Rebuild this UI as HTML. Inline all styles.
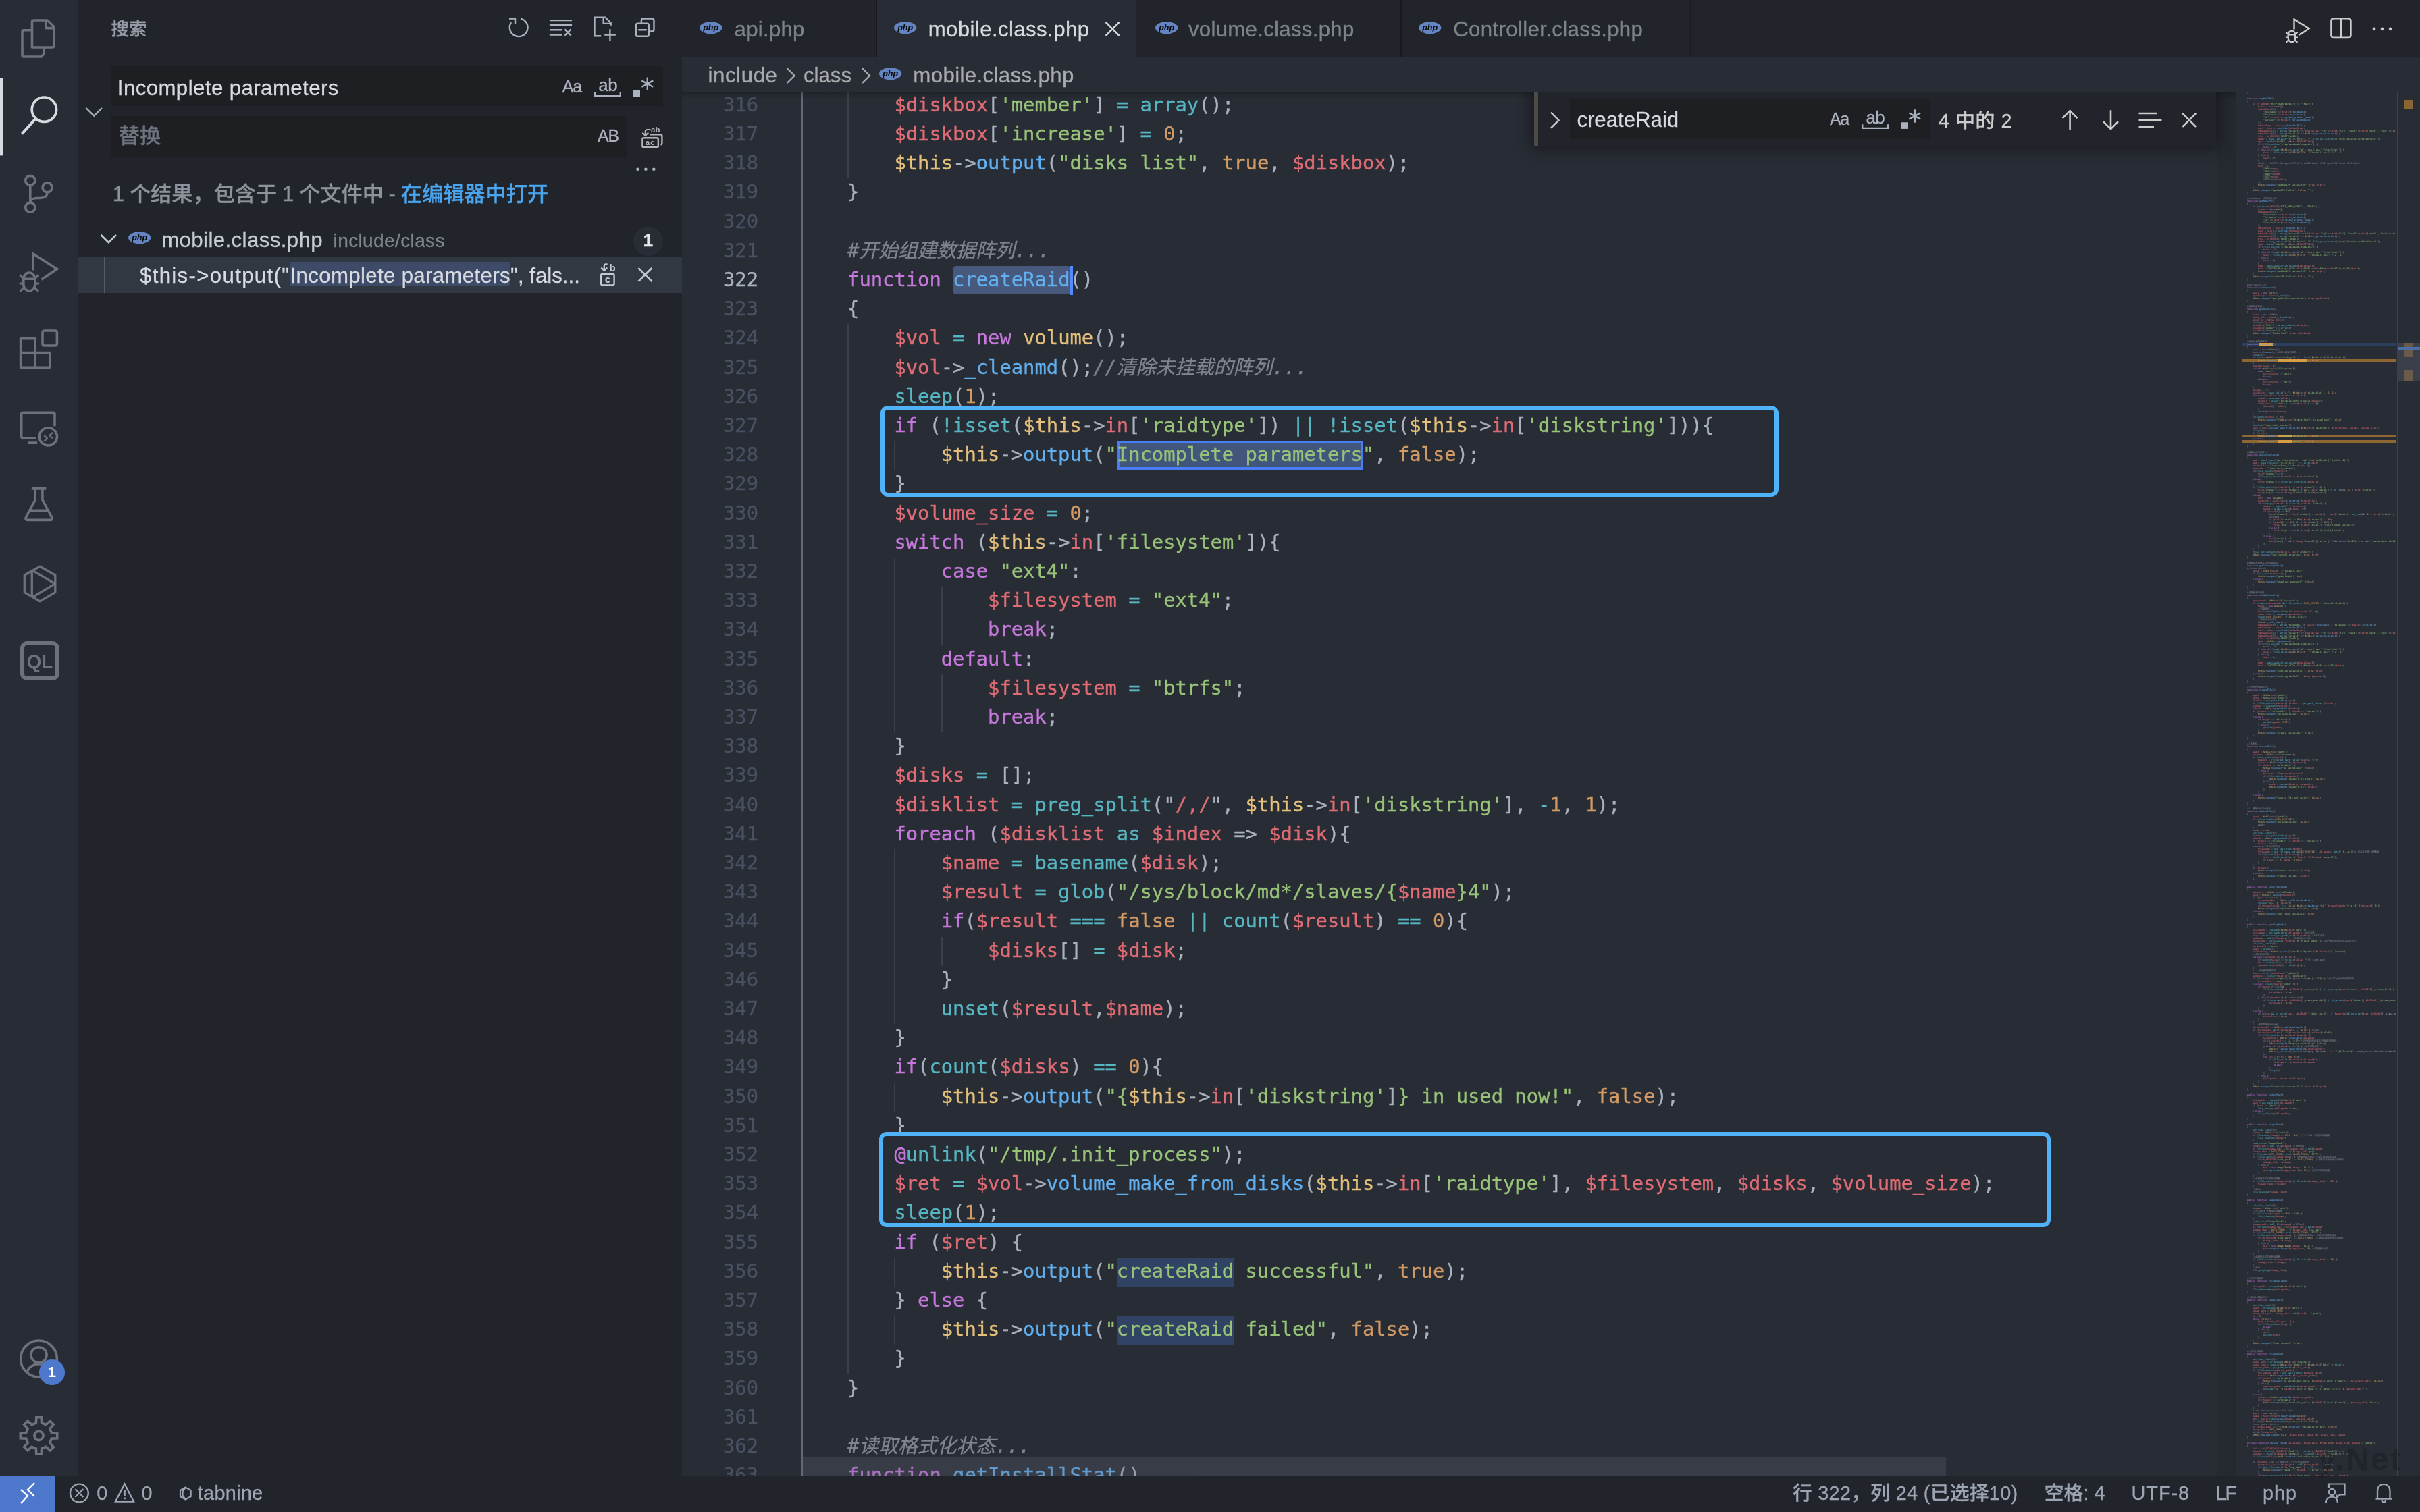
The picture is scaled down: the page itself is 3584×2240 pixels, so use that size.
<!DOCTYPE html><html><head><meta charset="utf-8"><title>mobile.class.php</title><style>
*{box-sizing:border-box}
html,body{margin:0;padding:0;background:#282c34}
body{width:3584px;height:2240px;overflow:hidden;position:relative;font-family:"Liberation Sans","Noto Sans CJK SC",sans-serif;font-size:31.2px;color:#abb2bf;font-weight:500}
div,span,svg{position:absolute}
i{font-style:normal}
.t{white-space:pre;line-height:1;-webkit-text-stroke:.32px}
.mono{font-family:"DejaVu Sans Mono","Noto Sans CJK SC",monospace;font-weight:400}
body>div{will-change:transform}
#act{left:0;top:0;width:116px;height:2186px;background:#282c34}
#side{left:116px;top:0;width:894px;height:2186px;background:#21252b}
#tabs{left:1010px;top:0;width:2574px;height:84px;background:#21252b}
#crumbs{left:1010px;top:84px;width:2574px;height:52.8px;background:#282c34}
#ed{left:1010px;top:136.8px;width:2574px;height:2049.2px;background:#282c34;overflow:hidden}
#status{left:0;top:2186px;width:3584px;height:54px;background:#21252b;font-size:28.8px;color:#9da5b4}
.ln{left:0;width:113px;margin-top:-1.1px;-webkit-text-stroke:.3px;text-align:right;font-size:28.8px;line-height:43.2px;height:43.2px;color:#495162;white-space:pre}
.cl{left:175.7px;margin-top:-1.1px;-webkit-text-stroke:.35px;font-size:28.8px;line-height:43.2px;height:43.2px;white-space:pre;color:#abb2bf}
.p{color:#c678dd}.r{color:#e06c75}.g{color:#98c379}.c{color:#56b6c2}.o{color:#d19a66}.y{color:#e5c07b}.b{color:#61afef}.m{color:#7f848e;font-style:italic}
.ig{width:2.4px;background:#3b4048}
.ig.a{background:#636872}
#mm{left:2310px;top:-0.8px;width:228px;height:2052px;overflow:hidden;font-size:3.322px;line-height:4px;opacity:.74;font-weight:bold}
#mm div{position:static;white-space:pre;height:4px}
</style></head><body><div id="act"><svg style="left:0px;top:0px" width="116" height="2186" viewBox="0 0 116 2186" ><path d="M47.5 70 V32.4 Q47.5 30 50 30 H70.2 L79.8 39.6 V67.6 Q79.8 70 77.4 70 Z M68.2 30.5 V41.6 H79.3" fill="none" stroke="#6c717c" stroke-width="3.6" stroke-linejoin="round" stroke-linecap="butt" /><path d="M47.5 44.8 H35.4 Q33 44.8 33 47.2 V81.6 Q33 84 35.4 84 H61 L65 80 V70" fill="none" stroke="#6c717c" stroke-width="3.6" stroke-linejoin="round" stroke-linecap="butt" /><circle cx="65.4" cy="162.2" r="18.2" fill="none" stroke="#d7dae0" stroke-width="3.7"/><path d="M52.9 175.6 L32.5 198.4" fill="none" stroke="#d7dae0" stroke-width="3.9" stroke-linejoin="round" stroke-linecap="butt" /><rect x="0" y="115.2" width="4.4" height="115.2" fill="#d7dae0"/><circle cx="44.8" cy="267.3" r="7.1" fill="none" stroke="#6c717c" stroke-width="3.6"/><circle cx="70.1" cy="277.7" r="7.1" fill="none" stroke="#6c717c" stroke-width="3.6"/><circle cx="44.8" cy="307.2" r="7.1" fill="none" stroke="#6c717c" stroke-width="3.6"/><path d="M44.8 274.4 V300.1 M70.1 284.8 C70 293.5 62 293.5 55 293.5 C49 293.5 45.5 296 44.8 300.1" fill="none" stroke="#6c717c" stroke-width="3.6" stroke-linejoin="round" stroke-linecap="butt" /><g id="dbg"><path d="M49.1 400.5 V376 L84.6 398.6 L61.4 414.3" fill="none" stroke="#6c717c" stroke-width="3.6" stroke-linejoin="miter" stroke-linecap="butt"/><path d="M34.8 414.5 C34.8 400.5 51.8 400.5 51.8 414.5 V421 C51.8 434 34.8 434 34.8 421 Z M34.8 413.2 H51.8" fill="none" stroke="#6c717c" stroke-width="3.6" stroke-linejoin="miter" stroke-linecap="butt"/><path d="M29.4 407.5 L35.4 413 M57.2 407.5 L51.2 413 M28.6 420 H34.8 M51.8 420 H58 M29.6 431.6 L36 425.8 M57 431.6 L50.6 425.8" fill="none" stroke="#6c717c" stroke-width="3.24" stroke-linejoin="miter" stroke-linecap="butt"/></g><path d="M30.6 500.8 H52.2 V522.6 H73.8 V544.3 H30.6 Z M30.6 522.6 H52.2 V544.3" fill="none" stroke="#6c717c" stroke-width="3.6" stroke-linejoin="round" stroke-linecap="butt" /><rect x="63" y="490" width="21.4" height="22" rx="2.5" fill="none" stroke="#6c717c" stroke-width="3.6"/><path d="M52.9 649 H34.1 Q31.7 649 31.7 646.6 V613.7 Q31.7 611.3 34.1 611.3 H78.6 Q81 611.3 81 613.7 V631.3 M41.1 656.1 H55.2" fill="none" stroke="#6c717c" stroke-width="3.6" stroke-linejoin="round" stroke-linecap="butt" /><circle cx="71.4" cy="646.9" r="13.1" fill="none" stroke="#6c717c" stroke-width="3.6"/><path d="M65.3 645.2 L70 649.4 L65.3 653.6 M78 641 L73.3 645.2 L78 649.4" fill="none" stroke="#6c717c" stroke-width="2.4" stroke-linejoin="round" stroke-linecap="butt" /><path d="M46.8 723.9 H68.3 M52.2 724 V740.5 L38.4 766.5 Q36.8 770.4 40.5 770.4 H74.6 Q78.3 770.4 76.7 766.5 L62.9 740.5 V724 M44.5 756.2 H70.6" fill="none" stroke="#6c717c" stroke-width="3.6" stroke-linejoin="round" stroke-linecap="butt" /><path d="M59.1 839.2 L81.8 852 V877.6 L59.1 890.9 L36.3 877.6 V852 Z M47.3 845.8 V884 M48 845 L81.5 864.8 L48 884.8" fill="none" stroke="#6c717c" stroke-width="3.3" stroke-linejoin="round" stroke-linecap="butt" /><rect x="33" y="953" width="51.9" height="51.9" rx="7" fill="none" stroke="#6c717c" stroke-width="6.1"/><text x="58.9" y="989.8" text-anchor="middle" font-family="Liberation Sans,sans-serif" font-weight="bold" font-size="29" fill="#6c717c" textLength="38.5" lengthAdjust="spacingAndGlyphs">QL</text><circle cx="57.5" cy="2012.9" r="26.9" fill="none" stroke="#6c717c" stroke-width="3.6"/><circle cx="57.5" cy="2007.3" r="11.6" fill="none" stroke="#6c717c" stroke-width="3.6"/><path d="M39.8 2033.5 C42 2025 50 2020.7 57.5 2020.7 C65 2020.7 73 2025 75.2 2033.5" fill="none" stroke="#6c717c" stroke-width="3.6" stroke-linejoin="round" stroke-linecap="butt" /><circle cx="77" cy="2033" r="19.1" fill="#4d78cc"/><text x="77" y="2040.3" text-anchor="middle" font-family="Liberation Sans,sans-serif" font-weight="bold" font-size="21.6" fill="#fff">1</text><path d="M53.4 2108.0 L53.8 2099.8 L61.2 2099.8 L61.6 2108.0 L68.0 2110.7 L74.1 2105.2 L79.3 2110.4 L73.8 2116.5 L76.5 2122.9 L84.7 2123.3 L84.7 2130.7 L76.5 2131.1 L73.8 2137.5 L79.3 2143.6 L74.1 2148.8 L68.0 2143.3 L61.6 2146.0 L61.2 2154.2 L53.8 2154.2 L53.4 2146.0 L47.0 2143.3 L40.9 2148.8 L35.7 2143.6 L41.2 2137.5 L38.5 2131.1 L30.3 2130.7 L30.3 2123.3 L38.5 2122.9 L41.2 2116.5 L35.7 2110.4 L40.9 2105.2 L47.0 2110.7 Z" fill="none" stroke="#6c717c" stroke-width="3.6" stroke-linejoin="miter"/><circle cx="57.5" cy="2127" r="6.6" fill="none" stroke="#6c717c" stroke-width="3.6"/></svg></div><div id="side"><div class="t" style="left:48.5px;top:30.3px;font-size:26.4px;color:#979da8">搜索</div><div style="left:48.5px;top:97.8px;width:817.5px;height:59.6px;background:#1d1f23"></div><div style="left:48.5px;top:172px;width:763.4px;height:59.6px;background:#1d1f23"></div><div class="t" style="left:57.80000000000001px;top:114.6px;font-size:31.2px;color:#d7dae0;letter-spacing:0.43px">Incomplete parameters</div><div class="t" style="left:59.80000000000001px;top:186.4px;font-size:31.2px;color:#6e747f">替换</div><div class="t" style="left:716.8px;top:116.4px;font-size:25px;color:#abb2bf;letter-spacing:-1.3px">Aa</div><div class="t" style="left:770.3px;top:113.2px;font-size:26px;color:#abb2bf;letter-spacing:-0.6px">ab</div><div class="t" style="left:769px;top:188.6px;font-size:25px;color:#abb2bf;letter-spacing:-1.1px">AB</div><div class="t" style="left:50.80000000000001px;top:272px;font-size:31.2px;color:#8d929b;word-spacing:-0.9px">1 个结果，包含于 1 个文件中 - <i style="color:#4aa5f0">在编辑器中打开</i></div><svg style="left:73.2px;top:342.3px" width="35.4" height="20.2"><ellipse cx="17.7" cy="10.1" rx="16.7" ry="9.1" fill="#6585c2"/><text x="17.7" y="13.5" text-anchor="middle" font-family="Liberation Sans,sans-serif" font-style="italic" font-weight="bold" font-size="12.6" fill="#0a0a0a">php</text></svg><div class="t" style="left:123.19999999999999px;top:339.6px;font-size:31.2px;color:#c5cad3;letter-spacing:0.41px">mobile.class.php</div><div class="t" style="left:377.6px;top:343px;font-size:28.08px;color:#7f848e;letter-spacing:0.35px">include/class</div><div style="left:822.4px;top:335.7px;width:43.2px;height:43.2px;border-radius:50%;background:#282c34"></div><div class="t" style="left:836.4px;top:343.2px;font-size:26.4px;color:#e6e8ec;font-weight:bold">1</div><div style="left:0;top:380px;width:894px;height:54px;background:#323842"></div><div style="left:38px;top:380px;width:2.2px;height:54px;background:#565b66"></div><div style="left:313.7px;top:388.2px;width:326.4px;height:35.8px;background:#3d4b69"></div><div class="t" style="left:91px;top:392.6px;font-size:31.2px;color:#d7dae0;letter-spacing:0px"><i style="letter-spacing:1.33px">$this-&gt;output("</i><i style="letter-spacing:.35px">Incomplete parameters</i>", fals...</div><svg style="left:0px;top:0px" width="894" height="500" viewBox="0 0 894 500" ><g transform="translate(-116 0)"><path d="M771.0 27.6 A13.4 13.4 0 1 1 757.1 33.2 M754 27.6 H763 V35.5" fill="none" stroke="#abb2bf" stroke-width="2.4" stroke-linejoin="miter" /><path d="M813.9 30.1 H847.1 M813.9 37 H847.1 M813.9 44.3 H832.7 M813.9 51.5 H832.7 M836.4 43.4 L845.6 52.6 M845.6 43.4 L836.4 52.6" fill="none" stroke="#abb2bf" stroke-width="2.4" stroke-linejoin="miter" /><path d="M890.2 53.2 H880.5 V25.7 H896.4 L904.7 34 V37.8 M893.7 25.7 V34.9 H904.7 M895.2 51.5 H911.9 M903.4 43.3 V59.9" fill="none" stroke="#abb2bf" stroke-width="2.4" stroke-linejoin="miter" /><path d="M944.4 34.8 H958.4 Q960.8 34.8 960.8 37.2 V51.4 Q960.8 53.8 958.4 53.8 H944.4 Q942 53.8 942 51.4 V37.2 Q942 34.8 944.4 34.8 Z M945.2 44.3 H957.7 M949.9 33.6 V30 Q949.9 27.6 952.3 27.6 H966 Q968.5 27.6 968.5 30 V44 Q968.5 46.5 966 46.5 H962" fill="none" stroke="#abb2bf" stroke-width="2.4" stroke-linejoin="miter" /><path d="M127.4 160 L139.2 171.6 L151 160" fill="none" stroke="#abb2bf" stroke-width="2.4" stroke-linejoin="miter" /><circle cx="944.5" cy="250.7" r="2.3" fill="#abb2bf"/><circle cx="956.4" cy="250.7" r="2.3" fill="#abb2bf"/><circle cx="968.3" cy="250.7" r="2.3" fill="#abb2bf"/><path d="M881.2 136.4 V142.1 H918.8 V136.4" fill="none" stroke="#abb2bf" stroke-width="2.4" stroke-linejoin="miter" /><rect x="938" y="133.5" width="10" height="9.6" fill="#abb2bf"/><path d="M958.8 114.4 V134 M950.4 119.4 L967.2 128.8 M967.2 119.4 L950.4 128.8" fill="none" stroke="#abb2bf" stroke-width="2.4" stroke-linejoin="miter" /><path d="M953.4 204.2 H972.8 Q974.8 204.2 974.8 206.2 V216.3 Q974.8 218.3 972.8 218.3 H953.4 Q951.4 218.3 951.4 216.3 V206.2 Q951.4 204.2 953.4 204.2 Z M962 199.2 H978 Q980.4 199.2 980.4 201.6 V212 Q980.4 214 978.4 214.4" fill="none" stroke="#b4b6b8" stroke-width="2.4" stroke-linejoin="miter" /><path d="M963.5 192 H958.5 Q955.8 192 955.8 194.7 V200.5 M951.4 196.4 L955.8 200.9 L960.2 196.4" fill="none" stroke="#b4b6b8" stroke-width="2.2" stroke-linejoin="miter" /><text x="970.8" y="195.6" text-anchor="middle" font-family="Liberation Sans,sans-serif" font-weight="bold" font-size="11.5" fill="#b4b6b8">ab</text><text x="963.2" y="215" text-anchor="middle" font-family="Liberation Sans,sans-serif" font-weight="bold" font-size="11.5" fill="#b4b6b8" letter-spacing="1">ac</text><path d="M149.6 348 L160.8 359.2 L172 348" fill="none" stroke="#c5c9d1" stroke-width="2.6" stroke-linejoin="miter" /><path d="M892.4 405.8 H907.4 Q909.6 405.8 909.6 408 V420.2 Q909.6 422.4 907.4 422.4 H892.4 Q890.2 422.4 890.2 420.2 V408 Q890.2 405.8 892.4 405.8 Z" fill="none" stroke="#c5c9d1" stroke-width="2.4" stroke-linejoin="miter" /><path d="M899.6 391.4 H897.4 Q894.8 391.4 894.8 394 V400.4 M890.4 396.4 L894.8 401 L899.2 396.4" fill="none" stroke="#c5c9d1" stroke-width="2.3" stroke-linejoin="miter" /><text x="907" y="401.6" text-anchor="middle" font-family="Liberation Sans,sans-serif" font-weight="bold" font-size="15" fill="#c5c9d1">b</text><text x="900" y="419.4" text-anchor="middle" font-family="Liberation Sans,sans-serif" font-weight="bold" font-size="15" fill="#c5c9d1">c</text><path d="M945.4 397 L965.4 417 M965.4 397 L945.4 417" fill="none" stroke="#c5c9d1" stroke-width="2.6" stroke-linejoin="miter" /></g></svg></div><div id="tabs"><div style="left:288.20000000000005px;top:0;width:383.79999999999995px;height:84px;background:#282c34"></div><div style="left:287.20000000000005px;top:0;width:1.4px;height:84px;background:#181a1f"></div><div style="left:672px;top:0;width:1.4px;height:84px;background:#181a1f"></div><div style="left:1064.4px;top:0;width:1.4px;height:84px;background:#181a1f"></div><div style="left:1492.5px;top:0;width:1.4px;height:84px;background:#181a1f"></div><svg style="left:25.2px;top:30.9px" width="35.4" height="20.2"><ellipse cx="17.7" cy="10.1" rx="16.7" ry="9.1" fill="#6585c2"/><text x="17.7" y="13.5" text-anchor="middle" font-family="Liberation Sans,sans-serif" font-style="italic" font-weight="bold" font-size="12.6" fill="#0a0a0a">php</text></svg><div class="t" style="left:77.59999999999991px;top:27.6px;font-size:31.2px;color:#7e828a;letter-spacing:0.25px">api.php</div><svg style="left:313.1px;top:30.9px" width="35.4" height="20.2"><ellipse cx="17.7" cy="10.1" rx="16.7" ry="9.1" fill="#6585c2"/><text x="17.7" y="13.5" text-anchor="middle" font-family="Liberation Sans,sans-serif" font-style="italic" font-weight="bold" font-size="12.6" fill="#0a0a0a">php</text></svg><div class="t" style="left:364.70000000000005px;top:27.6px;font-size:31.2px;color:#d7dae0;letter-spacing:0.4px">mobile.class.php</div><svg style="left:699.8px;top:30.9px" width="35.4" height="20.2"><ellipse cx="17.7" cy="10.1" rx="16.7" ry="9.1" fill="#6585c2"/><text x="17.7" y="13.5" text-anchor="middle" font-family="Liberation Sans,sans-serif" font-style="italic" font-weight="bold" font-size="12.6" fill="#0a0a0a">php</text></svg><div class="t" style="left:749.9000000000001px;top:27.6px;font-size:31.2px;color:#7e828a;letter-spacing:0.3px">volume.class.php</div><svg style="left:1090.3px;top:30.9px" width="35.4" height="20.2"><ellipse cx="17.7" cy="10.1" rx="16.7" ry="9.1" fill="#6585c2"/><text x="17.7" y="13.5" text-anchor="middle" font-family="Liberation Sans,sans-serif" font-style="italic" font-weight="bold" font-size="12.6" fill="#0a0a0a">php</text></svg><div class="t" style="left:1142.1999999999998px;top:27.6px;font-size:31.2px;color:#7e828a;letter-spacing:0.36px">Controller.class.php</div><svg style="left:0px;top:0px" width="2574" height="84" viewBox="0 0 2574 84" ><g transform="translate(-1010 0)"><path d="M1637.6 32.8 L1657.6 52.8 M1657.6 32.8 L1637.6 52.8" fill="none" stroke="#d7dae0" stroke-width="2.6"/><g transform="translate(3385 27.4) scale(0.617) translate(-28.8 -374.4)"><path d="M49.1 400.5 V376 L84.6 398.6 L61.4 414.3" fill="none" stroke="#cccccc" stroke-width="3.9" stroke-linejoin="miter" stroke-linecap="butt"/><path d="M34.8 414.5 C34.8 400.5 51.8 400.5 51.8 414.5 V421 C51.8 434 34.8 434 34.8 421 Z M34.8 413.2 H51.8" fill="none" stroke="#cccccc" stroke-width="3.9" stroke-linejoin="miter" stroke-linecap="butt"/><path d="M29.4 407.5 L35.4 413 M57.2 407.5 L51.2 413 M28.6 420 H34.8 M51.8 420 H58 M29.6 431.6 L36 425.8 M57 431.6 L50.6 425.8" fill="none" stroke="#cccccc" stroke-width="3.51" stroke-linejoin="miter" stroke-linecap="butt"/></g><rect x="3452.5" y="27.2" width="28.9" height="28.7" rx="3.5" fill="none" stroke="#cccccc" stroke-width="2.6"/><path d="M3466.9 27.2 V55.9" fill="none" stroke="#cccccc" stroke-width="2.6"/><circle cx="3516" cy="42.9" r="2.35" fill="#cccccc"/><circle cx="3528" cy="42.9" r="2.35" fill="#cccccc"/><circle cx="3540.1" cy="42.9" r="2.35" fill="#cccccc"/></g></svg></div><div id="crumbs"><div class="t" style="left:38.40000000000009px;top:12px;font-size:31.2px;color:#a9aaad;letter-spacing:0.62px">include</div><div class="t" style="left:180px;top:12px;font-size:31.2px;color:#a9aaad;letter-spacing:0px">class</div><svg style="left:291.0px;top:15.4px" width="35.4" height="20.2"><ellipse cx="17.7" cy="10.1" rx="16.7" ry="9.1" fill="#6585c2"/><text x="17.7" y="13.5" text-anchor="middle" font-family="Liberation Sans,sans-serif" font-style="italic" font-weight="bold" font-size="12.6" fill="#0a0a0a">php</text></svg><div class="t" style="left:342.29999999999995px;top:12px;font-size:31.2px;color:#a9aaad;letter-spacing:0.39px">mobile.class.php</div><svg style="left:0px;top:0px" width="700" height="52.8" viewBox="0 0 700 52.8" ><g transform="translate(-1010 -84)"><path d="M1165.6 101 L1176.6 112 L1165.6 123 M1277 101 L1288 112 L1277 123" fill="none" stroke="#a9aaad" stroke-width="2.4"/></g></svg></div><div id="ed"><div style="left:401.6px;top:257.0px;width:173.4px;height:42.0px;background:#47597c;border-radius:4px"></div><div style="left:644.1px;top:515.6px;width:364.7px;height:43.800000000000004px;background:#42557b;border:4.4px solid #4a7cf6"></div><div style="left:644.4px;top:1725.8px;width:173.4px;height:43.2px;background:#314365"></div><div style="left:644.4px;top:1812.2px;width:173.4px;height:43.2px;background:#314365"></div><div class="ig a" style="left:176.2px;top:-2.2px;height:43.2px"></div><div class="ig" style="left:244.7px;top:-2.2px;height:43.2px"></div><div class="ig a" style="left:176.2px;top:41.0px;height:43.2px"></div><div class="ig" style="left:244.7px;top:41.0px;height:43.2px"></div><div class="ig a" style="left:176.2px;top:84.2px;height:43.2px"></div><div class="ig" style="left:244.7px;top:84.2px;height:43.2px"></div><div class="ig a" style="left:176.2px;top:127.4px;height:43.2px"></div><div class="ig a" style="left:176.2px;top:170.6px;height:43.2px"></div><div class="ig a" style="left:176.2px;top:213.8px;height:43.2px"></div><div class="ig a" style="left:176.2px;top:257.0px;height:43.2px"></div><div class="ig a" style="left:176.2px;top:300.2px;height:43.2px"></div><div class="ig a" style="left:176.2px;top:343.4px;height:43.2px"></div><div class="ig" style="left:244.7px;top:343.4px;height:43.2px"></div><div class="ig a" style="left:176.2px;top:386.6px;height:43.2px"></div><div class="ig" style="left:244.7px;top:386.6px;height:43.2px"></div><div class="ig a" style="left:176.2px;top:429.8px;height:43.2px"></div><div class="ig" style="left:244.7px;top:429.8px;height:43.2px"></div><div class="ig a" style="left:176.2px;top:473.0px;height:43.2px"></div><div class="ig" style="left:244.7px;top:473.0px;height:43.2px"></div><div class="ig a" style="left:176.2px;top:516.2px;height:43.2px"></div><div class="ig" style="left:244.7px;top:516.2px;height:43.2px"></div><div class="ig" style="left:314.0px;top:516.2px;height:43.2px"></div><div class="ig a" style="left:176.2px;top:559.4px;height:43.2px"></div><div class="ig" style="left:244.7px;top:559.4px;height:43.2px"></div><div class="ig a" style="left:176.2px;top:602.6px;height:43.2px"></div><div class="ig" style="left:244.7px;top:602.6px;height:43.2px"></div><div class="ig a" style="left:176.2px;top:645.8px;height:43.2px"></div><div class="ig" style="left:244.7px;top:645.8px;height:43.2px"></div><div class="ig a" style="left:176.2px;top:689.0px;height:43.2px"></div><div class="ig" style="left:244.7px;top:689.0px;height:43.2px"></div><div class="ig" style="left:314.0px;top:689.0px;height:43.2px"></div><div class="ig a" style="left:176.2px;top:732.2px;height:43.2px"></div><div class="ig" style="left:244.7px;top:732.2px;height:43.2px"></div><div class="ig" style="left:314.0px;top:732.2px;height:43.2px"></div><div class="ig" style="left:383.4px;top:732.2px;height:43.2px"></div><div class="ig a" style="left:176.2px;top:775.4px;height:43.2px"></div><div class="ig" style="left:244.7px;top:775.4px;height:43.2px"></div><div class="ig" style="left:314.0px;top:775.4px;height:43.2px"></div><div class="ig" style="left:383.4px;top:775.4px;height:43.2px"></div><div class="ig a" style="left:176.2px;top:818.6px;height:43.2px"></div><div class="ig" style="left:244.7px;top:818.6px;height:43.2px"></div><div class="ig" style="left:314.0px;top:818.6px;height:43.2px"></div><div class="ig a" style="left:176.2px;top:861.8px;height:43.2px"></div><div class="ig" style="left:244.7px;top:861.8px;height:43.2px"></div><div class="ig" style="left:314.0px;top:861.8px;height:43.2px"></div><div class="ig" style="left:383.4px;top:861.8px;height:43.2px"></div><div class="ig a" style="left:176.2px;top:905.0px;height:43.2px"></div><div class="ig" style="left:244.7px;top:905.0px;height:43.2px"></div><div class="ig" style="left:314.0px;top:905.0px;height:43.2px"></div><div class="ig" style="left:383.4px;top:905.0px;height:43.2px"></div><div class="ig a" style="left:176.2px;top:948.2px;height:43.2px"></div><div class="ig" style="left:244.7px;top:948.2px;height:43.2px"></div><div class="ig a" style="left:176.2px;top:991.4px;height:43.2px"></div><div class="ig" style="left:244.7px;top:991.4px;height:43.2px"></div><div class="ig a" style="left:176.2px;top:1034.6px;height:43.2px"></div><div class="ig" style="left:244.7px;top:1034.6px;height:43.2px"></div><div class="ig a" style="left:176.2px;top:1077.8px;height:43.2px"></div><div class="ig" style="left:244.7px;top:1077.8px;height:43.2px"></div><div class="ig a" style="left:176.2px;top:1121.0px;height:43.2px"></div><div class="ig" style="left:244.7px;top:1121.0px;height:43.2px"></div><div class="ig" style="left:314.0px;top:1121.0px;height:43.2px"></div><div class="ig a" style="left:176.2px;top:1164.2px;height:43.2px"></div><div class="ig" style="left:244.7px;top:1164.2px;height:43.2px"></div><div class="ig" style="left:314.0px;top:1164.2px;height:43.2px"></div><div class="ig a" style="left:176.2px;top:1207.4px;height:43.2px"></div><div class="ig" style="left:244.7px;top:1207.4px;height:43.2px"></div><div class="ig" style="left:314.0px;top:1207.4px;height:43.2px"></div><div class="ig a" style="left:176.2px;top:1250.6px;height:43.2px"></div><div class="ig" style="left:244.7px;top:1250.6px;height:43.2px"></div><div class="ig" style="left:314.0px;top:1250.6px;height:43.2px"></div><div class="ig" style="left:383.4px;top:1250.6px;height:43.2px"></div><div class="ig a" style="left:176.2px;top:1293.8px;height:43.2px"></div><div class="ig" style="left:244.7px;top:1293.8px;height:43.2px"></div><div class="ig" style="left:314.0px;top:1293.8px;height:43.2px"></div><div class="ig a" style="left:176.2px;top:1337.0px;height:43.2px"></div><div class="ig" style="left:244.7px;top:1337.0px;height:43.2px"></div><div class="ig" style="left:314.0px;top:1337.0px;height:43.2px"></div><div class="ig a" style="left:176.2px;top:1380.2px;height:43.2px"></div><div class="ig" style="left:244.7px;top:1380.2px;height:43.2px"></div><div class="ig a" style="left:176.2px;top:1423.4px;height:43.2px"></div><div class="ig" style="left:244.7px;top:1423.4px;height:43.2px"></div><div class="ig a" style="left:176.2px;top:1466.6px;height:43.2px"></div><div class="ig" style="left:244.7px;top:1466.6px;height:43.2px"></div><div class="ig" style="left:314.0px;top:1466.6px;height:43.2px"></div><div class="ig a" style="left:176.2px;top:1509.8px;height:43.2px"></div><div class="ig" style="left:244.7px;top:1509.8px;height:43.2px"></div><div class="ig a" style="left:176.2px;top:1553.0px;height:43.2px"></div><div class="ig" style="left:244.7px;top:1553.0px;height:43.2px"></div><div class="ig a" style="left:176.2px;top:1596.2px;height:43.2px"></div><div class="ig" style="left:244.7px;top:1596.2px;height:43.2px"></div><div class="ig a" style="left:176.2px;top:1639.4px;height:43.2px"></div><div class="ig" style="left:244.7px;top:1639.4px;height:43.2px"></div><div class="ig a" style="left:176.2px;top:1682.6px;height:43.2px"></div><div class="ig" style="left:244.7px;top:1682.6px;height:43.2px"></div><div class="ig a" style="left:176.2px;top:1725.8px;height:43.2px"></div><div class="ig" style="left:244.7px;top:1725.8px;height:43.2px"></div><div class="ig" style="left:314.0px;top:1725.8px;height:43.2px"></div><div class="ig a" style="left:176.2px;top:1769.0px;height:43.2px"></div><div class="ig" style="left:244.7px;top:1769.0px;height:43.2px"></div><div class="ig a" style="left:176.2px;top:1812.2px;height:43.2px"></div><div class="ig" style="left:244.7px;top:1812.2px;height:43.2px"></div><div class="ig" style="left:314.0px;top:1812.2px;height:43.2px"></div><div class="ig a" style="left:176.2px;top:1855.4px;height:43.2px"></div><div class="ig" style="left:244.7px;top:1855.4px;height:43.2px"></div><div class="ig a" style="left:176.2px;top:1898.6px;height:43.2px"></div><div class="ig a" style="left:176.2px;top:1941.8px;height:43.2px"></div><div class="ig a" style="left:176.2px;top:1985.0px;height:43.2px"></div><div class="ig a" style="left:176.2px;top:2028.2px;height:43.2px"></div><div class="ln mono" style="top:-2.2px">316</div><div class="cl mono" style="top:-2.2px">        <i class=r>$diskbox</i>[<i class=g>'member'</i>] <i class=c>= array</i>();</div><div class="ln mono" style="top:41.0px">317</div><div class="cl mono" style="top:41.0px">        <i class=r>$diskbox</i>[<i class=g>'increase'</i>] <i class=c>= </i><i class=o>0</i>;</div><div class="ln mono" style="top:84.2px">318</div><div class="cl mono" style="top:84.2px">        <i class=y>$this</i>-&gt;<i class=b>output</i>(<i class=g>"disks list"</i>, <i class=o>true</i>, <i class=r>$diskbox</i>);</div><div class="ln mono" style="top:127.4px">319</div><div class="cl mono" style="top:127.4px">    }</div><div class="ln mono" style="top:170.6px">320</div><div class="ln mono" style="top:213.8px">321</div><div class="cl mono" style="top:213.8px">    <i class=m>#开始组建数据阵列...</i></div><div class="ln mono" style="top:257.0px;color:#abb2bf">322</div><div class="cl mono" style="top:257.0px">    <i class=p>function </i><i class=b>createRaid</i>()</div><div class="ln mono" style="top:300.2px">323</div><div class="cl mono" style="top:300.2px">    {</div><div class="ln mono" style="top:343.4px">324</div><div class="cl mono" style="top:343.4px">        <i class=r>$vol </i><i class=c>= </i><i class=p>new </i><i class=y>volume</i>();</div><div class="ln mono" style="top:386.6px">325</div><div class="cl mono" style="top:386.6px">        <i class=r>$vol</i>-&gt;<i class=b>_cleanmd</i>();<i class=m>//清除未挂载的阵列...</i></div><div class="ln mono" style="top:429.8px">326</div><div class="cl mono" style="top:429.8px">        <i class=c>sleep</i>(<i class=o>1</i>);</div><div class="ln mono" style="top:473.0px">327</div><div class="cl mono" style="top:473.0px">        <i class=p>if </i>(<i class=c>!isset</i>(<i class=y>$this</i>-&gt;<i class=r>in</i>[<i class=g>'raidtype'</i>]) <i class=c>|| !isset</i>(<i class=y>$this</i>-&gt;<i class=r>in</i>[<i class=g>'diskstring'</i>])){</div><div class="ln mono" style="top:516.2px">328</div><div class="cl mono" style="top:516.2px">            <i class=y>$this</i>-&gt;<i class=b>output</i>(<i class=g>"Incomplete parameters"</i>, <i class=o>false</i>);</div><div class="ln mono" style="top:559.4px">329</div><div class="cl mono" style="top:559.4px">        }</div><div class="ln mono" style="top:602.6px">330</div><div class="cl mono" style="top:602.6px">        <i class=r>$volume_size </i><i class=c>= </i><i class=o>0</i>;</div><div class="ln mono" style="top:645.8px">331</div><div class="cl mono" style="top:645.8px">        <i class=p>switch </i>(<i class=y>$this</i>-&gt;<i class=r>in</i>[<i class=g>'filesystem'</i>]){</div><div class="ln mono" style="top:689.0px">332</div><div class="cl mono" style="top:689.0px">            <i class=p>case </i><i class=g>"ext4"</i>:</div><div class="ln mono" style="top:732.2px">333</div><div class="cl mono" style="top:732.2px">                <i class=r>$filesystem </i><i class=c>= </i><i class=g>"ext4"</i>;</div><div class="ln mono" style="top:775.4px">334</div><div class="cl mono" style="top:775.4px">                <i class=p>break</i>;</div><div class="ln mono" style="top:818.6px">335</div><div class="cl mono" style="top:818.6px">            <i class=p>default</i>:</div><div class="ln mono" style="top:861.8px">336</div><div class="cl mono" style="top:861.8px">                <i class=r>$filesystem </i><i class=c>= </i><i class=g>"btrfs"</i>;</div><div class="ln mono" style="top:905.0px">337</div><div class="cl mono" style="top:905.0px">                <i class=p>break</i>;</div><div class="ln mono" style="top:948.2px">338</div><div class="cl mono" style="top:948.2px">        }</div><div class="ln mono" style="top:991.4px">339</div><div class="cl mono" style="top:991.4px">        <i class=r>$disks </i><i class=c>= </i>[];</div><div class="ln mono" style="top:1034.6px">340</div><div class="cl mono" style="top:1034.6px">        <i class=r>$disklist </i><i class=c>= preg_split</i>("<i class=r>/,/</i>", <i class=y>$this</i>-&gt;<i class=r>in</i>[<i class=g>'diskstring'</i>], <i class=c>-</i><i class=o>1</i>, <i class=o>1</i>);</div><div class="ln mono" style="top:1077.8px">341</div><div class="cl mono" style="top:1077.8px">        <i class=p>foreach </i>(<i class=r>$disklist </i><i class=c>as </i><i class=r>$index </i>=&gt; <i class=r>$disk</i>){</div><div class="ln mono" style="top:1121.0px">342</div><div class="cl mono" style="top:1121.0px">            <i class=r>$name </i><i class=c>= basename</i>(<i class=r>$disk</i>);</div><div class="ln mono" style="top:1164.2px">343</div><div class="cl mono" style="top:1164.2px">            <i class=r>$result </i><i class=c>= glob</i>(<i class=g>"/sys/block/md*/slaves/{</i><i class=r>$name</i><i class=g>}4"</i>);</div><div class="ln mono" style="top:1207.4px">344</div><div class="cl mono" style="top:1207.4px">            <i class=p>if</i>(<i class=r>$result </i><i class=c>=== </i><i class=o>false </i><i class=c>|| count</i>(<i class=r>$result</i>) <i class=c>== </i><i class=o>0</i>){</div><div class="ln mono" style="top:1250.6px">345</div><div class="cl mono" style="top:1250.6px">                <i class=r>$disks</i>[] <i class=c>= </i><i class=r>$disk</i>;</div><div class="ln mono" style="top:1293.8px">346</div><div class="cl mono" style="top:1293.8px">            }</div><div class="ln mono" style="top:1337.0px">347</div><div class="cl mono" style="top:1337.0px">            <i class=c>unset</i>(<i class=r>$result</i>,<i class=r>$name</i>);</div><div class="ln mono" style="top:1380.2px">348</div><div class="cl mono" style="top:1380.2px">        }</div><div class="ln mono" style="top:1423.4px">349</div><div class="cl mono" style="top:1423.4px">        <i class=p>if</i>(<i class=c>count</i>(<i class=r>$disks</i>) <i class=c>== </i><i class=o>0</i>){</div><div class="ln mono" style="top:1466.6px">350</div><div class="cl mono" style="top:1466.6px">            <i class=y>$this</i>-&gt;<i class=b>output</i>(<i class=g>"{</i><i class=y>$this</i>-&gt;<i class=r>in</i>[<i class=g>'diskstring'</i>]<i class=g>} in used now!"</i>, <i class=o>false</i>);</div><div class="ln mono" style="top:1509.8px">351</div><div class="cl mono" style="top:1509.8px">        }</div><div class="ln mono" style="top:1553.0px">352</div><div class="cl mono" style="top:1553.0px">        <i class=p>@</i><i class=c>unlink</i>(<i class=g>"/tmp/.init_process"</i>);</div><div class="ln mono" style="top:1596.2px">353</div><div class="cl mono" style="top:1596.2px">        <i class=r>$ret </i><i class=c>= </i><i class=r>$vol</i>-&gt;<i class=b>volume_make_from_disks</i>(<i class=y>$this</i>-&gt;<i class=r>in</i>[<i class=g>'raidtype'</i>], <i class=r>$filesystem</i>, <i class=r>$disks</i>, <i class=r>$volume_size</i>);</div><div class="ln mono" style="top:1639.4px">354</div><div class="cl mono" style="top:1639.4px">        <i class=c>sleep</i>(<i class=o>1</i>);</div><div class="ln mono" style="top:1682.6px">355</div><div class="cl mono" style="top:1682.6px">        <i class=p>if </i>(<i class=r>$ret</i>) {</div><div class="ln mono" style="top:1725.8px">356</div><div class="cl mono" style="top:1725.8px">            <i class=y>$this</i>-&gt;<i class=b>output</i>(<i class=g>"createRaid successful"</i>, <i class=o>true</i>);</div><div class="ln mono" style="top:1769.0px">357</div><div class="cl mono" style="top:1769.0px">        } <i class=p>else </i>{</div><div class="ln mono" style="top:1812.2px">358</div><div class="cl mono" style="top:1812.2px">            <i class=y>$this</i>-&gt;<i class=b>output</i>(<i class=g>"createRaid failed"</i>, <i class=o>false</i>);</div><div class="ln mono" style="top:1855.4px">359</div><div class="cl mono" style="top:1855.4px">        }</div><div class="ln mono" style="top:1898.6px">360</div><div class="cl mono" style="top:1898.6px">    }</div><div class="ln mono" style="top:1941.8px">361</div><div class="ln mono" style="top:1985.0px">362</div><div class="cl mono" style="top:1985.0px">    <i class=m>#读取格式化状态...</i></div><div class="ln mono" style="top:2028.2px">363</div><div class="cl mono" style="top:2028.2px">    <i class=p>function </i><i class=b>getInstallStat</i>()</div><div style="left:574.4px;top:257.0px;width:4.8px;height:43.2px;background:#528bff"></div><div style="left:293.5px;top:464.0px;width:1330.8px;height:135.2px;border:6.3px solid #50b2f8;border-radius:11px"></div><div style="left:291.8px;top:1540.3px;width:1735.0px;height:141.1px;border:6.3px solid #50b2f8;border-radius:11px"></div><div style="left:0;top:0;width:2302px;height:10px;background:linear-gradient(rgba(0,0,0,.2),rgba(0,0,0,0))"></div><div id="mmd" style="left:2310px;top:-0.8px;width:228px;height:2052px;overflow:hidden"><span style="left:0;top:372px;width:228px;height:4px;background:#2b405e"></span><span style="left:26px;top:372px;width:20px;height:4px;background:#e0963a"></span><span style="left:0;top:396px;width:228px;height:4px;background:#8e6632"></span><span style="left:54px;top:396px;width:42px;height:4px;background:#e0963a"></span><span style="left:0;top:508px;width:228px;height:4px;background:#8e6632"></span><span style="left:54px;top:508px;width:20px;height:4px;background:#e0963a"></span><span style="left:0;top:516px;width:228px;height:4px;background:#8e6632"></span><span style="left:54px;top:516px;width:20px;height:4px;background:#e0963a"></span></div><div id="mm" class="mono"><div>    }</div><div></div><div>    <i class=p>function </i><i class=b>appNasIPS</i>()</div><div>    {</div><div>        <i class=p>if </i>(<i class=r>$_SERVER</i>[<i class=g>'HTTP_USER_DEVICE'</i>] <i class=c>== </i><i class=g>"TNAS"</i>) {</div><div>            <i class=r>$core </i><i class=c>= </i><i class=p>new </i><i class=y>core</i>();</div><div>            <i class=r>$dataSheet</i>[<i class=o>0</i>] <i class=c>= </i>[</div><div>                <i class=g>"hostname" </i>=&gt; <i class=r>$core</i>-&gt;<i class=b>_hostname</i>(),</div><div>                <i class=g>"firmware" </i>=&gt; <i class=r>$core</i>-&gt;<i class=b>_version</i>(),</div><div>                <i class=g>"sn" </i>=&gt; <i class=r>$core</i>-&gt;<i class=b>_system_product_name</i>(),</div><div>                <i class=g>"version" </i>=&gt; <i class=r>$core</i>-&gt;<i class=b>_VersionNumber</i>()</div><div>            ];</div><div>            <i class=r>$defaultgw </i><i class=c>= </i><i class=r>$core</i>-&gt;<i class=b>_default_NIC</i>();</div><div>            <i class=r>$eth </i><i class=c>= </i><i class=r>$core</i>-&gt;<i class=b>_netlink</i>(<i class=r>$defaultgw</i>);</div><div>            <i class=r>$dataSheet</i>[<i class=o>1</i>] <i class=c>= array</i>(<i class=g>"network" </i>=&gt; <i class=r>$defaultgw</i>, <i class=g>"ip" </i>=&gt; <i class=r>$eth</i>[<i class=g>'ip'</i>], <i class=g>"mask" </i>=&gt; <i class=r>$eth</i>[<i class=g>'mask'</i>], <i class=g>"mac" </i>=&gt; <i class=r>$eth</i>['</div><div>            <i class=r>$dataSheet</i>[<i class=o>2</i>] <i class=c>= array</i>(<i class=g>"service" </i>=&gt; <i class=y>$this</i>-&gt;<i class=b>_getservicelist</i>());</div><div>            <i class=r>$ifc </i><i class=c>= </i><i class=r>$_SERVER</i>[<i class=g>'REMOTE_ADDR'</i>];</div><div>            <i class=r>$addr </i><i class=c>= preg_replace</i>(<i class=g>"/[:\s\r\n]+/"</i>, <i class=g>""</i>, <i class=c>file_get_contents</i>(<i class=g>"/sys/class/net/eth0/address"</i>));</div><div>            <i class=r>$pwd </i><i class=c>= hash</i>(<i class=g>"sha256"</i>, <i class=y>$this</i>-&gt;<i class=r>REQUESTCODE</i>);</div><div>            <i class=p>if </i>(<i class=c>!file_exists</i>(<i class=g>"/tmp/databack/complete"</i>)) {</div><div>                <i class=r>$sat </i><i class=c>= -</i><i class=o>1</i>;</div><div>            } <i class=p>else if </i>(<i class=c>!empty</i>(<i class=y>$this</i>-&gt;<i class=b>_exec</i>(<i class=g>"df -json | awk '/\/mnt\/md/'"</i>))) {</div><div>                <i class=r>$sat </i><i class=c>= !file_exists</i>(<i class=o>USER_SYSTEM </i><i class=c>. </i><i class=g>"/install.lock"</i>) <i class=c>? </i><i class=o>2 </i>: <i class=o>1</i>;</div><div>            } <i class=p>else </i>{</div><div>                <i class=r>$sat </i><i class=c>= </i><i class=o>0</i>;</div><div>            }</div><div>            <i class=m>#$tpl = "NOTIFY Message\nIFC:$ifc\nADDR:$addr\nPWD:$pwd\nSAT:$sat\nDAT:$dat";</i></div><div>            <i class=r>$tpl </i><i class=c>= </i>[</div><div>                <i class=g>"PWD"</i>=&gt;<i class=r>$pwd</i>,</div><div>                <i class=g>"IFC"</i>=&gt;<i class=r>$ifc</i>,</div><div>                <i class=g>"ADDR"</i>=&gt;<i class=r>$addr</i>,</div><div>                <i class=g>"SAT"</i>=&gt;<i class=r>$sat</i>,</div><div>                <i class=g>"DAT"</i>=&gt;<i class=r>$dataSheet</i>,</div><div>            ];</div><div>            <i class=y>$this</i>-&gt;<i class=b>output</i>(<i class=g>"appNasIPS successful"</i>, <i class=o>true</i>, <i class=r>$tpl</i>);</div><div>        }</div><div>        <i class=y>$this</i>-&gt;<i class=b>output</i>(<i class=g>"appNasIPS failed"</i>, <i class=o>false</i>, <i class=g>""</i>);</div><div>    }</div><div></div><div>    <i class=m>//webNas()  获取设备信息</i></div><div>    <i class=p>function </i><i class=b>webNasIPS</i>()</div><div>    {</div><div>        <i class=p>if </i>(<i class=c>strstr</i>(<i class=r>$_SERVER</i>[<i class=g>'HTTP_USER_AGENT'</i>], <i class=g>"TNAS"</i>)) {</div><div>            <i class=r>$core </i><i class=c>= </i><i class=p>new </i><i class=y>core</i>();</div><div>            <i class=r>$dataSheet</i>[<i class=o>0</i>] <i class=c>= </i>[</div><div>                <i class=g>"hostname" </i>=&gt; <i class=r>$core</i>-&gt;<i class=b>_hostname</i>(),</div><div>                <i class=g>"firmware" </i>=&gt; <i class=r>$core</i>-&gt;<i class=b>_version</i>(),</div><div>                <i class=g>"sn" </i>=&gt; <i class=r>$core</i>-&gt;<i class=b>_system_product_name</i>(),</div><div>                <i class=g>"version" </i>=&gt; <i class=r>$core</i>-&gt;<i class=b>_VersionNumber</i>()</div><div>            ];</div><div>            <i class=r>$defaultgw </i><i class=c>= </i><i class=r>$core</i>-&gt;<i class=b>_default_NIC</i>();</div><div>            <i class=r>$eth </i><i class=c>= </i><i class=r>$core</i>-&gt;<i class=b>_netlink</i>(<i class=r>$defaultgw</i>);</div><div>            <i class=r>$dataSheet</i>[<i class=o>1</i>] <i class=c>= array</i>(<i class=g>"network" </i>=&gt; <i class=r>$defaultgw</i>, <i class=g>"ip" </i>=&gt; <i class=r>$eth</i>[<i class=g>'ip'</i>], <i class=g>"mask" </i>=&gt; <i class=r>$eth</i>[<i class=g>'mask'</i>], <i class=g>"mac" </i>=&gt; <i class=r>$eth</i>['</div><div>            <i class=r>$dataSheet</i>[<i class=o>2</i>] <i class=c>= array</i>(<i class=g>"service" </i>=&gt; <i class=y>$this</i>-&gt;<i class=b>_getservicelist</i>());</div><div>            <i class=r>$ifc </i><i class=c>= </i><i class=r>$_SERVER</i>[<i class=g>'REMOTE_ADDR'</i>];</div><div>            <i class=r>$addr </i><i class=c>= preg_replace</i>(<i class=g>"/[:\s\r\n]+/"</i>, <i class=g>""</i>, <i class=c>file_get_contents</i>(<i class=g>"/sys/class/net/eth0/address"</i>));</div><div>            <i class=r>$pwd </i><i class=c>= hash</i>(<i class=g>"sha256"</i>, <i class=y>$this</i>-&gt;<i class=r>REQUESTCODE</i>);</div><div>            <i class=p>if </i>(<i class=c>!file_exists</i>(<i class=g>"/tmp/databack/complete"</i>)) {</div><div>                <i class=r>$sat </i><i class=c>= -</i><i class=o>1</i>;</div><div>            } <i class=p>else if </i>(<i class=c>!empty</i>(<i class=y>$this</i>-&gt;<i class=b>_exec</i>(<i class=g>"df -json | awk '/\/mnt\/md/'"</i>))) {</div><div>                <i class=r>$sat </i><i class=c>= !file_exists</i>(<i class=o>USER_SYSTEM </i><i class=c>. </i><i class=g>"/install.lock"</i>) <i class=c>? </i><i class=o>2 </i>: <i class=o>1</i>;</div><div>            } <i class=p>else </i>{</div><div>                <i class=r>$sat </i><i class=c>= </i><i class=o>0</i>;</div><div>            }</div><div>            <i class=r>$dat </i><i class=c>= addslashes</i>(<i class=c>json_encode</i>(<i class=r>$dataSheet</i>));</div><div>            <i class=r>$tpl </i><i class=c>= </i><i class=g>"NOTIFY Message\nIFC:</i><i class=r>$ifc</i><i class=g>\nADDR:</i><i class=r>$addr</i><i class=g>\nPWD:</i><i class=r>$pwd</i><i class=g>\nSAT:</i><i class=r>$sat</i><i class=g>\nDAT:</i><i class=r>$dat</i><i class=g>"</i>;</div><div>            <i class=y>$this</i>-&gt;<i class=b>output</i>(<i class=g>"webNasIPS successful"</i>, <i class=o>true</i>, <i class=r>$tpl</i>);</div><div>        }</div><div>        <i class=y>$this</i>-&gt;<i class=b>output</i>(<i class=g>"webNasIPS failed"</i>, <i class=o>false</i>, <i class=g>""</i>);</div><div>    }</div><div></div><div>    <i class=m>#get public ip</i></div><div>    <i class=p>function </i><i class=b>isConnected</i>()</div><div>    {</div><div>        <i class=r>$core </i><i class=c>= </i><i class=p>new </i><i class=y>core</i>();</div><div>        <i class=r>$publicip </i><i class=c>= </i><i class=r>$core</i>-&gt;<i class=b>_wanip</i>();</div><div>        <i class=y>$this</i>-&gt;<i class=b>output</i>(<i class=g>"get publicip successful"</i>, <i class=o>true</i>, <i class=r>$publicip</i>);</div><div>    }</div><div></div><div>    <i class=m>#获取磁盘列表...</i></div><div>    <i class=p>function </i><i class=b>getDiskList</i>()</div><div>    {</div><div>        <i class=r>$raid </i><i class=c>= </i><i class=p>new </i><i class=y>raid</i>();</div><div>        <i class=r>$disk_all </i><i class=c>= </i><i class=r>$raid</i>-&gt;<i class=b>_disklist</i>();</div><div>        <i class=r>$disk_in </i><i class=c>= </i><i class=r>$disk_all</i>[<i class=o>1</i>];</div><div>        <i class=c>ksort</i>(<i class=r>$disk_in</i>);</div><div>        <i class=r>$diskbox</i>[<i class=g>'list'</i>] <i class=c>= array_values</i>(<i class=r>$disk_in</i>);</div><div>        <i class=r>$diskbox</i>[<i class=g>'member'</i>] <i class=c>= array</i>();</div><div>        <i class=r>$diskbox</i>[<i class=g>'increase'</i>] <i class=c>= </i><i class=o>0</i>;</div><div>        <i class=y>$this</i>-&gt;<i class=b>output</i>(<i class=g>"disks list"</i>, <i class=o>true</i>, <i class=r>$diskbox</i>);</div><div>    }</div><div></div><div>    <i class=m>#开始组建数据阵列...</i></div><div>    <i class=p>function </i><i class=b>createRaid</i>()</div><div>    {</div><div>        <i class=r>$vol </i><i class=c>= </i><i class=p>new </i><i class=y>volume</i>();</div><div>        <i class=r>$vol</i>-&gt;<i class=b>_cleanmd</i>();<i class=m>//清除未挂载的阵列...</i></div><div>        <i class=c>sleep</i>(<i class=o>1</i>);</div><div>        <i class=p>if </i>(<i class=c>!isset</i>(<i class=y>$this</i>-&gt;<i class=r>in</i>[<i class=g>'raidtype'</i>]) <i class=c>|| !isset</i>(<i class=y>$this</i>-&gt;<i class=r>in</i>[<i class=g>'diskstring'</i>])){</div><div>            <i class=y>$this</i>-&gt;<i class=b>output</i>(<i class=g>"Incomplete parameters"</i>, <i class=o>false</i>);</div><div>        }</div><div>        <i class=r>$volume_size </i><i class=c>= </i><i class=o>0</i>;</div><div>        <i class=p>switch </i>(<i class=y>$this</i>-&gt;<i class=r>in</i>[<i class=g>'filesystem'</i>]){</div><div>            <i class=p>case </i><i class=g>"ext4"</i>:</div><div>                <i class=r>$filesystem </i><i class=c>= </i><i class=g>"ext4"</i>;</div><div>                <i class=p>break</i>;</div><div>            <i class=p>default</i>:</div><div>                <i class=r>$filesystem </i><i class=c>= </i><i class=g>"btrfs"</i>;</div><div>                <i class=p>break</i>;</div><div>        }</div><div>        <i class=r>$disks </i><i class=c>= </i>[];</div><div>        <i class=r>$disklist </i><i class=c>= preg_split</i>(<i class=g>"/,/"</i>, <i class=y>$this</i>-&gt;<i class=r>in</i>[<i class=g>'diskstring'</i>], <i class=c>-</i><i class=o>1</i>, <i class=o>1</i>);</div><div>        <i class=p>foreach </i>(<i class=r>$disklist </i><i class=c>as </i><i class=r>$index </i>=&gt; <i class=r>$disk</i>){</div><div>            <i class=r>$name </i><i class=c>= basename</i>(<i class=r>$disk</i>);</div><div>            <i class=r>$result </i><i class=c>= glob</i>(<i class=g>"/sys/block/md*/slaves/{</i><i class=r>$name</i><i class=g>}4"</i>);</div><div>            <i class=p>if</i>(<i class=r>$result </i><i class=c>=== </i><i class=o>false </i><i class=c>|| count</i>(<i class=r>$result</i>) <i class=c>== </i><i class=o>0</i>){</div><div>                <i class=r>$disks</i>[] <i class=c>= </i><i class=r>$disk</i>;</div><div>            }</div><div>            <i class=c>unset</i>(<i class=r>$result</i>,<i class=r>$name</i>);</div><div>        }</div><div>        <i class=p>if</i>(<i class=c>count</i>(<i class=r>$disks</i>) <i class=c>== </i><i class=o>0</i>){</div><div>            <i class=y>$this</i>-&gt;<i class=b>output</i>(<i class=g>"{</i><i class=y>$this</i>-&gt;<i class=r>in</i>[<i class=g>'diskstring'</i>]<i class=g>} in used now!"</i>, <i class=o>false</i>);</div><div>        }</div><div>        <i class=p>@</i><i class=c>unlink</i>(<i class=g>"/tmp/.init_process"</i>);</div><div>        <i class=r>$ret </i><i class=c>= </i><i class=r>$vol</i>-&gt;<i class=b>volume_make_from_disks</i>(<i class=y>$this</i>-&gt;<i class=r>in</i>[<i class=g>'raidtype'</i>], <i class=r>$filesystem</i>, <i class=r>$disks</i>, <i class=r>$volume_size</i>);</div><div>        <i class=c>sleep</i>(<i class=o>1</i>);</div><div>        <i class=p>if </i>(<i class=r>$ret</i>) {</div><div>            <i class=y>$this</i>-&gt;<i class=b>output</i>(<i class=g>"createRaid successful"</i>, <i class=o>true</i>);</div><div>        } <i class=p>else </i>{</div><div>            <i class=y>$this</i>-&gt;<i class=b>output</i>(<i class=g>"createRaid failed"</i>, <i class=o>false</i>);</div><div>        }</div><div>    }</div><div></div><div>    <i class=m>#读取格式化状态...</i></div><div>    <i class=p>function </i><i class=b>getInstallStat</i>()</div><div>    {</div><div>        <i class=r>$md </i><i class=c>= shell_exec</i>(<i class=g>"cat /proc/mdstat | awk '/md[^(md0|md8)]/ {print $1}'"</i>);</div><div>        <i class=r>$md </i><i class=c>= preg_replace</i>(<i class=g>"/[\s\r\n]+/"</i>, <i class=g>""</i>, <i class=c>trim</i>(<i class=r>$md</i>));</div><div>        <i class=r>$statefile </i><i class=c>= </i><i class=g>"/tmp/volume_"</i><i class=c>.substr</i>(<i class=r>$md</i>, <i class=o>2</i>);</div><div>        <i class=r>$tmpfile </i><i class=c>= </i><i class=g>"/tmp/.init_process"</i>;</div><div>        <i class=p>if</i>(<i class=c>!file_exists</i>(<i class=r>$tmpfile</i>)){</div><div>            <i class=r>$ret</i>[<i class=g>'status'</i>] <i class=c>= </i><i class=o>0</i>;</div><div>            <i class=p>@</i><i class=c>file_put_contents</i>(<i class=r>$tmpfile</i>, <i class=r>$ret</i>[<i class=g>'status'</i>]);</div><div>        }<i class=p>else</i>{</div><div>            <i class=r>$ret</i>[<i class=g>'status'</i>] <i class=c>= </i><i class=p>@</i><i class=c>file_get_contents</i>(<i class=r>$tmpfile</i>);</div><div>        }</div><div>        <i class=p>if </i>(<i class=c>!file_exists</i>(<i class=r>$statefile</i>) <i class=c>|| </i><i class=r>$ret</i>[<i class=g>'status'</i>] <i class=c>&lt; </i><i class=o>10</i>) {</div><div>            <i class=r>$ret</i>[<i class=g>'status'</i>] <i class=c>= </i><i class=r>$ret</i>[<i class=g>'status'</i>] <i class=c>&lt; </i><i class=o>10 </i><i class=c>? </i><i class=r>$ret</i>[<i class=g>'status'</i>] <i class=c>+ mt_rand</i>(<i class=o>1</i>, <i class=o>2</i>) : <i class=r>$ret</i>[<i class=g>'status'</i>];</div><div>            <i class=r>$ret</i>[<i class=g>'msg'</i>] <i class=c>= </i>self::<i class=r>$lang</i>[<i class=g>'install'</i>][<i class=g>'raid_create'</i>];</div><div>        }<i class=p>else</i>{</div><div>            <i class=r>$vol </i><i class=c>= </i><i class=p>new </i><i class=y>volume</i>();</div><div>            <i class=r>$content </i><i class=c>= </i><i class=r>$vol</i>-&gt;<i class=r>fun</i>-&gt;<i class=b>_rcontent</i>(<i class=r>$statefile</i>);</div><div>            <i class=p>if </i>(<i class=c>!empty</i>(<i class=r>$content</i>) <i class=c>&amp;&amp; strstr</i>(<i class=r>$content</i>, <i class=g>"make"</i>)) {</div><div>                <i class=r>$input </i><i class=c>= explode</i>(<i class=g>","</i>, <i class=r>$content</i>);</div><div>                <i class=r>$seed </i><i class=c>= array_slice</i>(<i class=r>$input</i>, <i class=c>-</i><i class=o>2</i>);</div><div>                <i class=p>if </i>(<i class=r>$seed</i>[<i class=o>0</i>] <i class=c>== </i><i class=g>"0"</i>) {</div><div>                    <i class=r>$ret</i>[<i class=g>'status'</i>] <i class=c>= </i><i class=r>$ret</i>[<i class=g>'status'</i>] <i class=c>&lt; </i><i class=r>$seed</i>[<i class=o>1</i>] <i class=c>? </i><i class=r>$ret</i>[<i class=g>'status'</i>] <i class=c>+ mt_rand</i>(<i class=o>1</i>, <i class=o>2</i>) : <i class=r>$ret</i>[<i class=g>'status'</i>];</div><div>                    <i class=m>#防止超出...</i></div><div>                    <i class=p>if </i>(<i class=r>$ret</i>[<i class=g>'status'</i>] <i class=c>&gt; </i><i class=o>100</i>) <i class=r>$ret</i>[<i class=g>'status'</i>] <i class=c>= </i><i class=o>100</i>;</div><div>                    <i class=p>if </i>(<i class=r>$seed</i>[<i class=o>1</i>] <i class=c>== </i><i class=o>100 </i><i class=c>&amp;&amp; </i><i class=r>$ret</i>[<i class=g>'status'</i>] <i class=c>== </i><i class=o>100</i>) {</div><div>                        <i class=r>$ret</i>[<i class=g>'msg'</i>] <i class=c>= </i>self::<i class=r>$lang</i>[<i class=g>'install'</i>][<i class=g>'raid_format_success'</i>];</div><div>                    } <i class=p>else </i>{</div><div>                        <i class=r>$ret</i>[<i class=g>'msg'</i>] <i class=c>= </i>self::<i class=r>$lang</i>[<i class=g>'install'</i>][<i class=g>'raid_format'</i>];</div><div>                    }</div><div>                } <i class=p>else </i>{</div><div>                    <i class=r>$ret</i>[<i class=g>'error'</i>] <i class=c>= </i><i class=o>1</i>;</div><div>                    <i class=r>$ret</i>[<i class=g>'msg'</i>] <i class=c>= </i>self::<i class=r>$lang</i>[<i class=g>'install'</i>][<i class=g>'error'</i>]<i class=c>.</i>"<i class=c>&lt;</i>div <i class=p>class</i><i class=c>=</i><i class=g>'btnInit'</i><i class=c>&gt;&lt;</i>a href<i class=c>=</i><i class=g>'javascript:void(0)' </i>o</div><div>                }</div><div>            }</div><div>        }</div><div>        <i class=p>@</i><i class=c>file_put_contents</i>(<i class=r>$tmpfile</i>, <i class=r>$ret</i>[<i class=g>'status'</i>]);</div><div>        <i class=y>$this</i>-&gt;<i class=b>output</i>(<i class=g>"get install progress"</i>, <i class=o>true</i>, <i class=r>$ret</i>);</div><div>    }</div><div></div><div>    <i class=m>#管理员密码是否已经设置完成</i></div><div>    <i class=p>function </i><i class=b>getIsConfigAdmin</i>()</div><div>    {<i class=m>//todo Jaylin</i></div><div>        <i class=r>$lock </i><i class=c>= </i><i class=o>USER_SYSTEM </i><i class=c>. </i><i class=g>"/install.lock"</i>;</div><div>        <i class=p>if </i>(<i class=c>file_exists</i>(<i class=r>$lock</i>)) {</div><div>            <i class=y>$this</i>-&gt;<i class=b>output</i>(<i class=g>"goto login"</i>, <i class=o>true</i>);</div><div>        } <i class=p>else </i>{</div><div>            <i class=y>$this</i>-&gt;<i class=b>output</i>(<i class=g>"need set password"</i>, <i class=o>false</i>);</div><div>        }</div><div>    }</div><div></div><div>    <i class=m>#设置管理员密码</i></div><div>    <i class=p>function </i><i class=b>setAdminConfig</i>()</div><div>    {</div><div>        <i class=r>$password </i><i class=c>= </i><i class=y>$this</i>-&gt;<i class=r>in</i>[<i class=g>'password'</i>];</div><div>        <i class=p>if </i>(<i class=c>!empty</i>(<i class=r>$password</i>) <i class=c>&amp;&amp; !file_exists</i>(<i class=o>USER_SYSTEM </i><i class=c>. </i><i class=g>"/install.lock"</i>)) {</div><div>            <i class=r>$user </i><i class=c>= </i><i class=p>new </i><i class=y>person</i>();</div><div>            <i class=m>//设置密码...</i></div><div>            <i class=r>$user</i>-&gt;<i class=b>modifyUser</i>(<i class=g>"admin"</i>, <i class=r>$password</i>, <i class=g>""</i>, <i class=o>0</i>);</div><div>            <i class=r>$user</i>-&gt;<i class=r>fun</i>-&gt;<i class=b>_rootpass</i>(<i class=r>$password</i>);</div><div>            <i class=c>touch</i>(<i class=o>USER_SYSTEM </i><i class=c>. </i><i class=g>"/install.lock"</i>);</div><div>            <i class=m>//初始化共享目录...</i></div><div>            <i class=y>$this</i>-&gt;<i class=b>_init_share</i>();</div><div>            <i class=r>$dataSheet</i>[<i class=o>0</i>] <i class=c>= array</i>(<i class=g>"hostname" </i>=&gt; <i class=r>$user</i>-&gt;<i class=b>_hostname</i>(), <i class=g>"firmware" </i>=&gt; <i class=r>$user</i>-&gt;<i class=b>_version</i>());</div><div>            <i class=r>$defaultgw </i><i class=c>= </i><i class=r>$user</i>-&gt;<i class=b>_default_NIC</i>();</div><div>            <i class=r>$eth </i><i class=c>= </i><i class=r>$user</i>-&gt;<i class=b>_netlink</i>(<i class=r>$defaultgw</i>);</div><div>            <i class=r>$dataSheet</i>[<i class=o>1</i>] <i class=c>= array</i>(<i class=g>"network" </i>=&gt; <i class=r>$defaultgw</i>, <i class=g>"ip" </i>=&gt; <i class=r>$eth</i>[<i class=g>'ip'</i>], <i class=g>"mask" </i>=&gt; <i class=r>$eth</i>[<i class=g>'mask'</i>], <i class=g>"mac" </i>=&gt; <i class=r>$eth</i>['</div><div>            <i class=r>$dataSheet</i>[<i class=o>2</i>] <i class=c>= array</i>(<i class=g>"service" </i>=&gt; <i class=y>$this</i>-&gt;<i class=b>_getservicelist</i>());</div><div>            <i class=r>$ifc </i><i class=c>= </i><i class=r>$_SERVER</i>[<i class=g>'REMOTE_ADDR'</i>];</div><div>            <i class=r>$pwd </i><i class=c>= </i><i class=y>$this</i>-&gt;<i class=b>_getpasswd</i>();</div><div>            <i class=p>if </i>(<i class=c>!file_exists</i>(<i class=g>"/tmp/databack/complete"</i>)) {</div><div>                <i class=r>$sat </i><i class=c>= -</i><i class=o>1</i>;</div><div>            } <i class=p>else if </i>(<i class=c>!empty</i>(<i class=y>$this</i>-&gt;<i class=b>_exec</i>(<i class=g>"df -json | awk '/\/mnt\/md/'"</i>))) {</div><div>                <i class=r>$sat </i><i class=c>= !file_exists</i>(<i class=o>USER_SYSTEM </i><i class=c>. </i><i class=g>"/install.lock"</i>) <i class=c>? </i><i class=o>2 </i>: <i class=o>1</i>;</div><div>            } <i class=p>else </i>{</div><div>                <i class=r>$sat </i><i class=c>= </i><i class=o>0</i>;</div><div>            }</div><div>            <i class=r>$dat </i><i class=c>= addslashes</i>(<i class=c>json_encode</i>(<i class=r>$dataSheet</i>));</div><div>            <i class=r>$tpl </i><i class=c>= </i><i class=g>"NOTIFY Message\nIFC:</i><i class=r>$ifc</i><i class=g>\nPWD:</i><i class=r>$pwd</i><i class=g>\nSAT:</i><i class=r>$sat</i><i class=g>\nDAT:</i><i class=r>$dat</i><i class=g>"</i>;</div><div></div><div>            <i class=y>$this</i>-&gt;<i class=b>output</i>(<i class=g>"setting successful!"</i>, <i class=o>true</i>, <i class=r>$tpl</i>);</div><div>        } <i class=p>else </i>{</div><div>            <i class=y>$this</i>-&gt;<i class=b>output</i>(<i class=g>"setting failed!"</i>, <i class=o>false</i>, <i class=r>$password</i>);</div><div>        }</div><div>    }</div><div></div><div>    <i class=m>//创建文件或文件夹</i></div><div>    <i class=p>function </i><i class=b>createFile</i>()</div><div>    {</div><div>        <i class=r>$path </i><i class=c>= </i><i class=y>$this</i>-&gt;<i class=r>in</i>[<i class=g>'path'</i>];</div><div>        <i class=r>$type </i><i class=c>= </i><i class=y>$this</i>-&gt;<i class=r>in</i>[<i class=g>'type'</i>];</div><div>        <i class=r>$father </i><i class=c>= get_path_father</i>(<i class=r>$path</i>);</div><div>        <i class=p>if </i>(<i class=c>!file_exists</i>(<i class=r>$father</i>)) <i class=r>$father </i><i class=c>= get_path_father</i>(<i class=r>$father</i>);</div><div>        <i class=r>$father </i><i class=c>= realpath</i>(<i class=r>$father</i>);</div><div>        <i class=r>$check </i><i class=c>= </i><i class=y>$this</i>-&gt;<i class=b>getpathAcl</i>(<i class=r>$father</i>);</div><div>        <i class=p>if </i>(<i class=r>$check </i><i class=c>!= </i><i class=g>"writeable" </i><i class=c>|| </i><i class=r>$check </i><i class=c>== </i><i class=g>'protect'</i>) {</div><div>            <i class=y>$this</i>-&gt;<i class=b>output</i>(<i class=g>"no permission"</i>, <i class=o>false</i>);</div><div>        } <i class=p>else </i>{</div><div>            <i class=p>if </i>(<i class=r>$type </i><i class=c>== </i><i class=g>'folder'</i>) {</div><div>                <i class=c>mk_dir</i>(<i class=r>$path</i>, <i class=o>0777</i>);</div><div>            } <i class=p>else </i>{</div><div>                <i class=p>@</i><i class=c>touch</i>(<i class=r>$path</i>);</div><div>            }</div><div>            <i class=y>$this</i>-&gt;<i class=b>output</i>(<i class=g>"create successful"</i>, <i class=o>true</i>);</div><div>        }</div><div>    }</div><div></div><div>    <i class=m>//重命名...</i></div><div>    <i class=p>function </i><i class=b>renameFile</i>()</div><div>    {</div><div>        <i class=r>$path </i><i class=c>= </i><i class=y>$this</i>-&gt;<i class=r>in</i>[<i class=g>'path'</i>];</div><div>        <i class=r>$newname </i><i class=c>= </i><i class=y>$this</i>-&gt;<i class=r>in</i>[<i class=g>'newname'</i>];</div><div>        <i class=p>if </i>(<i class=c>file_exists</i>(<i class=r>$path</i>)) {</div><div>            <i class=r>$parent </i><i class=c>= rtrim</i>(<i class=c>get_path_father</i>(<i class=r>$path</i>), <i class=g>"/"</i>);</div><div>            <i class=r>$check </i><i class=c>= </i><i class=y>$this</i>-&gt;<i class=b>getpathAcl</i>(<i class=r>$parent</i>);</div><div>            <i class=p>if </i>(<i class=r>$check </i><i class=c>!= </i><i class=g>"writeable"</i>) {</div><div>                <i class=y>$this</i>-&gt;<i class=b>output</i>(<i class=g>"no permission"</i>, <i class=o>false</i>);</div><div>            } <i class=p>else </i>{</div><div>                <i class=r>$newpath </i><i class=c>= </i><i class=g>"</i><i class=r>$parent</i><i class=g>/</i><i class=r>$newname</i><i class=g>"</i>;</div><div>                <i class=p>if </i>(<i class=c>file_exists</i>(<i class=r>$newpath</i>)) {</div><div>                    <i class=y>$this</i>-&gt;<i class=b>output</i>(<i class=g>"rename file faild"</i>, <i class=o>false</i>);</div><div>                } <i class=p>else </i>{</div><div>                    <i class=r>$code </i><i class=c>= </i><i class=p>@</i><i class=c>rename</i>(<i class=r>$path</i>, <i class=r>$newpath</i>);</div><div>                    <i class=y>$this</i>-&gt;<i class=b>output</i>(<i class=g>"rename file"</i>, <i class=r>$code</i>);</div><div>                }</div><div>            }</div><div>        } <i class=p>else </i>{</div><div>            <i class=y>$this</i>-&gt;<i class=b>output</i>(<i class=g>"source file not exists"</i>, <i class=o>false</i>);</div><div>        }</div><div>    }</div><div></div><div>    <i class=m>//  删除文件或文件夹...</i></div><div>    <i class=p>function </i><i class=b>deleteFile</i>()</div><div>    {</div><div>        <i class=r>$path </i><i class=c>= </i><i class=y>$this</i>-&gt;<i class=r>in</i>[<i class=g>'path'</i>];</div><div>        <i class=p>if </i>(<i class=c>!is_writable</i>(<i class=o>USER_RECYCLE</i>)) {</div><div>            <i class=y>$this</i>-&gt;<i class=b>output</i>(<i class=g>"no permission"</i>, <i class=o>false</i>);</div><div>            exit;</div><div>        }</div><div>        <i class=r>$code </i><i class=c>= </i><i class=o>true</i>;</div><div>        <i class=c>set_time_limit</i>(<i class=o>0</i>);</div><div>        <i class=r>$father </i><i class=c>= get_path_father</i>(<i class=r>$path</i>);</div><div>        <i class=r>$check </i><i class=c>= </i><i class=y>$this</i>-&gt;<i class=b>getpathAcl</i>(<i class=r>$father</i>);</div><div>        <i class=p>if </i>(<i class=r>$check </i><i class=c>!= </i><i class=g>"writeable" </i><i class=c>|| </i><i class=r>$check </i><i class=c>== </i><i class=g>'protect'</i>) {</div><div>            <i class=r>$code </i><i class=c>= </i><i class=o>false</i>;</div><div>        } <i class=p>else </i>{<i class=m>//移动到回收站</i></div><div>            <i class=r>$filename </i><i class=c>= get_path_this</i>(<i class=r>$path</i>);</div><div>            <i class=r>$filename </i><i class=c>= get_filename_auto</i>(<i class=o>USER_RECYCLE </i><i class=c>. </i><i class=r>$filename</i>, <i class=c>date</i>(<i class=g>' h.i.s'</i>));<i class=m>//已存在处理 创建副本</i></div><div>            <i class=p>if </i>(<i class=c>!</i><i class=p>@</i><i class=c>rename</i>(<i class=r>$path</i>, <i class=r>$filename</i>)) {</div><div>                <i class=r>$ret </i><i class=c>= shell_exec</i>(<i class=g>"mv -f '</i><i class=r>$path</i><i class=g>' '</i><i class=r>$filename</i><i class=g>';echo $?"</i>);</div><div>                <i class=p>if </i>(<i class=r>$ret </i><i class=c>!= </i><i class=o>0</i>) <i class=r>$code </i><i class=c>= </i><i class=o>false</i>;</div><div>            }</div><div>        }</div><div>        <i class=p>if </i>(<i class=r>$code</i>) {</div><div>            <i class=y>$this</i>-&gt;<i class=b>output</i>(<i class=g>"remove success"</i>, <i class=r>$code</i>);</div><div>        } <i class=p>else </i>{</div><div>            <i class=y>$this</i>-&gt;<i class=b>output</i>(<i class=g>"remove failed"</i>, <i class=r>$code</i>);</div><div>        }</div><div>    }</div><div></div><div>    <i class=p>public function </i><i class=b>stopTranscode</i>()</div><div>    {</div><div>        <i class=r>$keyword </i><i class=c>= </i><i class=y>$this</i>-&gt;<i class=r>in</i>[<i class=g>'md5name'</i>];</div><div>        <i class=r>$pid </i><i class=c>= </i><i class=y>$this</i>-&gt;<i class=b>_getpid</i>(<i class=r>$keyword</i>);</div><div>        <i class=p>if </i>(<i class=r>$pid </i><i class=c>!== </i><i class=o>false</i>) {</div><div>            <i class=r>$translateDir </i><i class=c>= </i><i class=y>$this</i>-&gt;<i class=b>_mkTranslateDir</i>();</div><div>            <i class=c>system</i>(<i class=g>"kill -9 {</i><i class=r>$pid</i><i class=g>}"</i>);</div><div>            <i class=p>if </i>(<i class=r>$translateDir </i><i class=c>!== </i><i class=o>false</i>) <i class=y>$this</i>-&gt;<i class=b>_backexec</i>(<i class=g>"cd '{</i><i class=r>$translateDir</i><i class=g>}';rm -fr {</i><i class=r>$keyword</i><i class=g>}* &amp;"</i>);</div><div>            <i class=y>$this</i>-&gt;<i class=b>output</i>(<i class=g>"stopTranscode success"</i>, <i class=o>true</i>);</div><div>        } <i class=p>else </i>{</div><div>            <i class=y>$this</i>-&gt;<i class=b>output</i>(<i class=g>"not found processId"</i>, <i class=o>true</i>);</div><div>        }</div><div>    }</div><div></div><div>    <i class=p>public function </i><i class=b>getPlayPath</i>()</div><div>    {</div><div>        <i class=r>$filepath </i><i class=c>= realpath</i>(<i class=y>$this</i>-&gt;<i class=r>in</i>[<i class=g>'path'</i>]);</div><div>        <i class=r>$filename </i><i class=c>= get_path_this</i>(<i class=r>$filepath</i>);<i class=m>//文件名称...</i></div><div>        <i class=r>$ext </i><i class=c>= strtolower</i>(<i class=c>get_path_ext</i>(<i class=r>$filepath</i>));<i class=m>//文件扩展名...</i></div><div>        <i class=r>$md5name </i><i class=c>= md5</i>(<i class=r>$filename</i>);<i class=m>//...转码后的文件名...</i></div><div>        <i class=r>$platform </i><i class=c>= strtolower</i>(<i class=r>$_SERVER</i>[<i class=g>'HTTP_USER_AGENT'</i>]);<i class=m>//客户端平台类型ios/android</i></div><div>        <i class=c>set_time_limit</i>(<i class=o>0</i>);</div><div>        <i class=r>$translate </i><i class=c>= </i><i class=o>false</i>;</div><div>        <i class=r>$para </i><i class=c>= array</i>();</div><div>        <i class=r>$videoArray </i><i class=c>= </i><i class=y>$this</i>-&gt;<i class=b>_exec</i>(<i class=g>"/usr/bin/ffprobe \"</i><i class=r>$filepath</i><i class=g>\""</i>, <i class=g>"array"</i>);</div><div>        <i class=m># 解析视频参数...</i></div><div>        <i class=p>foreach </i>(<i class=r>$videoArray </i><i class=c>as </i><i class=r>$line</i>) {</div><div>            <i class=p>if </i>(<i class=c>empty</i>(<i class=r>$line</i>) <i class=c>|| !strstr</i>(<i class=r>$line</i>, <i class=g>"="</i>)) <i class=p>continue</i>;</div><div>            <i class=r>$tp </i><i class=c>= explode</i>(<i class=g>"="</i>, <i class=r>$line</i>);</div><div>            <i class=r>$para</i>[<i class=c>trim</i>(<i class=r>$tp</i>[<i class=o>0</i>])] <i class=c>= trim</i>(<i class=r>$tp</i>[<i class=o>1</i>]);</div><div>        }</div><div>        <i class=m>//  判断是否需要转码...</i></div><div>        <i class=r>$ios </i><i class=c>= strstr</i>(<i class=r>$platform</i>, <i class=g>"iphone"</i>);</div><div>        <i class=r>$android </i><i class=c>= strstr</i>(<i class=r>$platform</i>, <i class=g>"android"</i>);</div><div>        <i class=p>if </i>(<i class=c>isset</i>(<i class=r>$para</i>[<i class=g>'height'</i>]) <i class=c>&amp;&amp; </i><i class=r>$para</i>[<i class=g>'height'</i>] <i class=c>&gt; </i><i class=o>720</i>) {<i class=m>//大于720p的视频需要转码...</i></div><div>            <i class=r>$translate </i><i class=c>= </i><i class=o>true</i>;</div><div>        } <i class=p>elseif </i>(<i class=c>isset</i>(<i class=r>$para</i>[<i class=g>'video'</i>])) {</div><div>            <i class=p>if </i>(<i class=r>$ios</i>) {<i class=m>//ios设备</i></div><div>                <i class=p>if </i>(<i class=c>!in_array</i>(<i class=r>$ext</i>, <i class=r>$GLOBALS</i>[<i class=g>'_video_ios'</i>]) <i class=c>|| in_array</i>(<i class=r>$para</i>[<i class=g>'video'</i>], <i class=r>$GLOBALS</i>[<i class=g>'_stream_ios'</i>])) {</div><div>                    <i class=r>$translate </i><i class=c>= </i><i class=o>true</i>;</div><div>                }</div><div>            } <i class=p>elseif </i>(<i class=r>$android</i>) {<i class=m>//android设备</i></div><div>                <i class=p>if </i>(<i class=c>!in_array</i>(<i class=r>$ext</i>, <i class=r>$GLOBALS</i>[<i class=g>'_video_android'</i>]) <i class=c>|| in_array</i>(<i class=r>$para</i>[<i class=g>'video'</i>], <i class=r>$GLOBALS</i>[<i class=g>'_stream_android'</i></div><div>                    <i class=r>$translate </i><i class=c>= </i><i class=o>true</i>;</div><div>                }</div><div>            }</div><div>        } <i class=p>else </i>{</div><div>            <i class=p>if </i>((<i class=r>$ios </i><i class=c>&amp;&amp; in_array</i>(<i class=r>$ext</i>, <i class=r>$GLOBALS</i>[<i class=g>'_video_ios'</i>])) <i class=c>|| </i>(<i class=r>$android </i><i class=c>&amp;&amp; in_array</i>(<i class=r>$ext</i>, <i class=r>$GLOBALS</i>['_video_andro</div><div>                <i class=r>$translate </i><i class=c>= </i><i class=o>true</i>;</div><div>            }</div><div>        }</div><div>        <i class=m>//  需要转码的视频处理...</i></div><div>        <i class=r>$translateDir </i><i class=c>= </i><i class=y>$this</i>-&gt;<i class=b>_mkTranslateDir</i>();</div><div>        <i class=p>if </i>(<i class=r>$translate </i><i class=c>&amp;&amp; </i><i class=r>$translateDir </i><i class=c>!= </i><i class=o>false</i>) {<i class=m>//todo</i></div><div>            <i class=r>$translatefilepath </i><i class=c>= </i><i class=g>"{</i><i class=r>$translateDir</i><i class=g>}/{</i><i class=r>$md5name</i><i class=g>}.m3u8"</i>;</div><div>            <i class=p>if </i>(<i class=c>!file_exists</i>(<i class=r>$translatefilepath</i>)) {</div><div>                <i class=r>$_checkid </i><i class=c>= </i><i class=y>$this</i>-&gt;<i class=b>_checkpid</i>(<i class=r>$md5name</i>);</div><div>                <i class=p>if </i>(<i class=r>$_checkid </i><i class=c>=== </i><i class=o>1</i>) {<i class=m>//有一个正在转码的进程且不是当前视频的...</i></div><div>                    <i class=y>$this</i>-&gt;<i class=b>output</i>(<i class=g>"ffmpeg translating"</i>, <i class=o>false</i>);</div><div>                } <i class=p>else if </i>(<i class=r>$_checkid </i><i class=c>=== </i><i class=o>0</i>) {<i class=m>//没有转码进程...</i></div><div>                    <i class=y>$this</i>-&gt;<i class=b>_removeTranslateOld</i>(<i class=r>$translateDir</i>);</div><div>                    <i class=y>$this</i>-&gt;<i class=b>_backexec</i>("<i class=c>/</i>usr<i class=c>/</i>bin<i class=c>/</i>ffmpeg <i class=c>-</i>threads:<i class=o>1 4 </i><i class=c>-</i>i <i class=g>'{$filepath}' </i><i class=c>-</i>vaapi_device <i class=c>/</i>dev<i class=c>/</i>dri<i class=c>/</i>renderD128 </div><div>                }</div><div>                <i class=p>for </i>(<i class=r>$i </i><i class=c>= </i><i class=o>0</i>; <i class=r>$i </i><i class=c>&lt; </i><i class=o>100</i>; <i class=r>$i</i><i class=c>++</i>) {</div><div>                    <i class=p>if </i>(<i class=c>file_exists</i>(<i class=r>$translatefilepath</i>)) {</div><div>                        <i class=r>$filepath </i><i class=c>= </i><i class=r>$translatefilepath</i>;</div><div>                        <i class=p>break</i>;</div><div>                    }</div><div>                    <i class=c>sleep</i>(<i class=o>1</i>);</div><div>                }</div><div>            } <i class=p>else </i>{</div><div>                <i class=r>$filepath </i><i class=c>= </i><i class=r>$translatefilepath</i>;</div><div>            }</div><div>        }</div><div>        <i class=y>$this</i>-&gt;<i class=b>output</i>(<i class=g>"translate successful!"</i>, <i class=o>true</i>, <i class=r>$filepath</i>);</div><div>    }</div><div></div><div>    <i class=p>public function </i><i class=b>videoPlay</i>()</div><div>    {</div><div>        <i class=r>$filepath </i><i class=c>= realpath</i>(<i class=y>$this</i>-&gt;<i class=r>in</i>[<i class=g>'path'</i>]);</div><div>        <i class=r>$ext </i><i class=c>= get_path_ext</i>(<i class=r>$filepath</i>);</div><div>        <i class=p>if </i>(<i class=r>$ext </i><i class=c>== </i><i class=g>"php"</i>) {</div><div>            <i class=c>file_put_out</i>(<i class=r>$filepath</i>, <i class=o>true</i>);</div><div>        } <i class=p>else </i>{</div><div>            <i class=c>file_playing</i>(<i class=r>$filepath</i>);</div><div>        }</div><div>    }</div><div></div><div>    <i class=p>public function </i><i class=b>imageThumb</i>()</div><div>    {</div><div>        <i class=c>set_time_limit</i>(<i class=o>0</i>);</div><div>        <i class=r>$image </i><i class=c>= </i><i class=y>$this</i>-&gt;<i class=r>in</i>[<i class=g>'path'</i>];</div><div>        <i class=p>if </i>(<i class=c>filesize</i>(<i class=r>$image</i>) <i class=c>&lt;= </i><i class=o>1024 </i><i class=c>* </i><i class=o>10</i>) {<i class=m>//小于10k 不再生成缩略图</i></div><div>            <i class=c>file_playing</i>(<i class=r>$image</i>);</div><div>        }</div><div>        <i class=c>load_class</i>(<i class=g>"imageThumb"</i>);</div><div>        <i class=r>$image_md5 </i><i class=c>= md5_file</i>(<i class=r>$image</i>);<i class=m>//文件md5</i></div><div>        <i class=p>if </i>(<i class=c>strlen</i>(<i class=r>$image_md5</i>) <i class=c>&lt; </i><i class=o>5</i>) <i class=r>$image_md5 </i><i class=c>= md5</i>(<i class=r>$image</i>);</div><div>        <i class=r>$image_thum </i><i class=c>= </i><i class=o>DATA_THUMB </i><i class=c>. </i><i class=g>"/{</i><i class=r>$image_md5</i><i class=g>}.png"</i>;</div><div>        <i class=p>if </i>(<i class=c>!is_dir</i>(<i class=o>DATA_THUMB</i>)) <i class=c>mkdir</i>(<i class=o>DATA_THUMB</i>, <i class=g>"0777"</i>);</div><div>        <i class=p>if </i>(<i class=c>!file_exists</i>(<i class=r>$image_thum</i>)) {<i class=m>//如果拼装成的url不存在则没有生成过</i></div><div>            <i class=p>if </i>(<i class=r>$_SESSION</i>[<i class=g>'this_path'</i>] <i class=c>== </i><i class=o>DATA_THUMB</i>) {<i class=m>//当前目录则不生成缩略图</i></div><div>                <i class=r>$image_thum </i><i class=c>= </i><i class=r>$image</i>;</div><div>            } <i class=p>else </i>{</div><div>                <i class=r>$cm </i><i class=c>= </i><i class=p>new </i><i class=y>imageThumb</i>(<i class=r>$image</i>, <i class=g>'file'</i>);</div><div>                <i class=r>$cm</i>-&gt;<i class=b>prorate</i>(<i class=r>$image_thum</i>, <i class=o>80</i>, <i class=o>80</i>);<i class=m>//生成等比例缩略图</i></div><div>            }</div><div>        }</div><div>        <i class=m>//缩略图生成失败则用原图...</i></div><div>        <i class=p>if </i>(<i class=c>!file_exists</i>(<i class=r>$image_thum</i>) <i class=c>|| filesize</i>(<i class=r>$image_thum</i>) <i class=c>&lt; </i><i class=o>100</i>) {</div><div>            <i class=r>$image_thum </i><i class=c>= </i><i class=r>$image</i>;</div><div>        }</div><div>        <i class=m>//输出...</i></div><div>        <i class=c>file_playing</i>(<i class=r>$image_thum</i>);</div><div>    }</div><div></div><div>    <i class=p>public function </i><i class=b>imageView</i>()</div><div>    {</div><div>        <i class=c>set_time_limit</i>(<i class=o>0</i>);</div><div>        <i class=r>$image </i><i class=c>= </i><i class=y>$this</i>-&gt;<i class=r>in</i>[<i class=g>'path'</i>];</div><div>        <i class=m>//小于100k 不再生成缩略图</i></div><div>        <i class=p>if </i>(<i class=c>filesize</i>(<i class=r>$image</i>) <i class=c>&lt;= </i><i class=o>1024 </i><i class=c>* </i><i class=o>100</i>) {</div><div>            <i class=c>file_playing</i>(<i class=r>$image</i>);</div><div>        }</div><div>        <i class=c>load_class</i>(<i class=g>"imageThumb"</i>);</div><div>        <i class=r>$image_md5 </i><i class=c>= md5_file</i>(<i class=r>$image</i>);<i class=m>//文件md5</i></div><div>        <i class=p>if </i>(<i class=c>strlen</i>(<i class=r>$image_md5</i>) <i class=c>&lt; </i><i class=o>5</i>) <i class=r>$image_md5 </i><i class=c>= md5</i>(<i class=r>$image</i>);</div><div>        <i class=r>$image_thum </i><i class=c>= </i><i class=o>DATA_THUMB </i><i class=c>. </i><i class=g>"/{</i><i class=r>$image_md5</i><i class=g>}_low.jpg"</i>;</div><div>        <i class=p>if </i>(<i class=c>!is_dir</i>(<i class=o>DATA_THUMB</i>)) <i class=c>mkdir</i>(<i class=o>DATA_THUMB</i>, <i class=g>"0777"</i>);</div><div>        <i class=p>if </i>(<i class=c>!file_exists</i>(<i class=r>$image_thum</i>)) {<i class=m>//如果拼装成的url不存在则没有生成过</i></div><div>            <i class=p>if </i>(<i class=r>$_SESSION</i>[<i class=g>'this_path'</i>] <i class=c>== </i><i class=o>DATA_THUMB</i>) {<i class=m>//当前目录则不生成缩略图</i></div><div>                <i class=r>$image_thum </i><i class=c>= </i><i class=r>$image</i>;</div><div>            } <i class=p>else </i>{</div><div>                <i class=r>$cm </i><i class=c>= </i><i class=p>new </i><i class=y>imageThumb</i>(<i class=r>$image</i>, <i class=g>'file'</i>);</div><div>                <i class=r>$cm</i>-&gt;<i class=b>compressImage</i>(<i class=r>$image_thum</i>, <i class=o>20</i>);<i class=m>//压缩图片质量</i></div><div>            }</div><div>        }</div><div>        <i class=m>//缩略图生成失败则用原图...</i></div><div>        <i class=p>if </i>(<i class=c>!file_exists</i>(<i class=r>$image_thum</i>) <i class=c>|| filesize</i>(<i class=r>$image_thum</i>) <i class=c>&lt; </i><i class=o>100</i>) {</div><div>            <i class=r>$image_thum </i><i class=c>= </i><i class=r>$image</i>;</div><div>        }</div><div>        <i class=m>//输出...</i></div><div>        <i class=c>file_playing</i>(<i class=r>$image_thum</i>);</div><div>    }</div><div></div><div>    <i class=m>//文件下载接口</i></div><div>    <i class=p>public function </i><i class=b>fileDownload</i>()</div><div>    {</div><div>        <i class=r>$filepath </i><i class=c>= realpath</i>(<i class=y>$this</i>-&gt;<i class=r>in</i>[<i class=g>'path'</i>]);</div><div>        <i class=c>file_downloading</i>(<i class=r>$filepath</i>);</div><div>    }</div><div></div><div>    <i class=m>//清除上传临时文件</i></div><div>    <i class=p>public function </i><i class=b>tempClear</i>()</div><div>    {</div><div>        <i class=c>set_time_limit</i>(<i class=o>0</i>);</div><div>        <i class=r>$path </i><i class=c>= urldecode</i>(<i class=y>$this</i>-&gt;<i class=r>in</i>[<i class=g>'path'</i>]);</div><div>        <i class=r>$temp_path </i><i class=c>= </i><i class=o>USER_TEMP</i>;</div><div>        <i class=r>$temp_file_pre </i><i class=c>= </i><i class=r>$temp_path </i><i class=c>. md5</i>(<i class=r>$path</i>) <i class=c>. </i><i class=g>".part"</i>;</div><div>        <i class=r>$i </i><i class=c>= </i><i class=o>0</i>;</div><div>        <i class=p>while </i>(<i class=o>true</i>) {</div><div>            <i class=r>$tmp </i><i class=c>= </i><i class=r>$temp_file_pre </i><i class=c>. </i><i class=r>$i</i>;</div><div>            <i class=p>if </i>(<i class=c>!file_exists</i>(<i class=r>$tmp</i>)) {</div><div>                <i class=p>break</i>;</div><div>            } <i class=p>else </i>{</div><div>                <i class=r>$i</i><i class=c>++</i>;</div><div>                <i class=c>unlink</i>(<i class=r>$tmp</i>);</div><div>            }</div><div>        }</div><div>        <i class=y>$this</i>-&gt;<i class=b>output</i>(<i class=g>"clear success"</i>, <i class=o>true</i>);</div><div>    }</div><div></div><div>    <i class=m>//文件上传接口</i></div><div>    <i class=p>public function </i><i class=b>fileUpload</i>()</div><div>    {</div><div>        <i class=c>set_time_limit</i>(<i class=o>0</i>);</div><div>        <i class=r>$save_path </i><i class=c>= urldecode</i>(<i class=y>$this</i>-&gt;<i class=r>in</i>[<i class=g>'saveTo'</i>]);</div><div>        <i class=r>$save_time </i><i class=c>= !empty</i>(<i class=y>$this</i>-&gt;<i class=r>in</i>[<i class=g>'date'</i>]) <i class=c>? </i><i class=y>$this</i>-&gt;<i class=r>in</i>[<i class=g>'date'</i>] : <i class=c>time</i>();</div><div>        <i class=r>$parent_path </i><i class=c>= get_path_father</i>(<i class=r>$save_path</i>);</div><div>        <i class=p>if </i>(<i class=c>!file_exists</i>(<i class=r>$parent_path</i>)) {</div><div>            <i class=r>$to_parent_path </i><i class=c>= get_path_father</i>(<i class=r>$parent_path</i>);</div><div>            <i class=r>$check </i><i class=c>= </i><i class=y>$this</i>-&gt;<i class=b>getpathAcl</i>(<i class=r>$to_parent_path</i>);</div><div>            <i class=p>if </i>(<i class=r>$check </i><i class=c>!= </i><i class=g>"writeable"</i>) {</div><div>                <i class=y>$this</i>-&gt;<i class=b>output</i>(<i class=g>"no_permission_write, {</i><i class=r>$GLOBALS</i>[<i class=g>'user'</i>][<i class=g>'name'</i>]<i class=g>}, </i><i class=r>$to_parent_path</i><i class=g>"</i>, <i class=o>false</i>);</div><div>            } <i class=p>else </i>{</div><div>                <i class=r>$parent_path </i><i class=c>= addslashes</i>(<i class=r>$parent_path</i>, <i class=g>' '</i>);</div><div>                <i class=p>@</i><i class=c>system</i>(<i class=g>"su - {</i><i class=r>$GLOBALS</i>[<i class=g>'user'</i>][<i class=g>'name'</i>]<i class=g>} -c 'mkdir -m 777 -p </i><i class=r>$parent_path</i><i class=g>'"</i>);</div><div>            }</div><div>        } <i class=p>else</i>{</div><div>            <i class=r>$check </i><i class=c>= </i><i class=y>$this</i>-&gt;<i class=b>getpathAcl</i>(<i class=r>$parent_path</i>);</div><div>            <i class=p>if </i>(<i class=r>$check </i><i class=c>!= </i><i class=g>"writeable"</i>) {</div><div>                <i class=y>$this</i>-&gt;<i class=b>output</i>(<i class=g>"no_permission_write, {</i><i class=r>$GLOBALS</i>[<i class=g>'user'</i>][<i class=g>'name'</i>]<i class=g>}, </i><i class=r>$parent_path</i><i class=g>"</i>, <i class=o>false</i>);</div><div>            }</div><div>        }</div><div>        <i class=m># add the quota check for http...</i></div><div>        <i class=r>$core </i><i class=c>= </i><i class=p>new </i><i class=y>core</i>();</div><div>        <i class=r>$name </i><i class=c>= </i><i class=r>$core</i>-&gt;<i class=r>fun</i>-&gt;<i class=b>_BaseFileName</i>(<i class=o>USER</i>);</div><div>        <i class=r>$qt </i><i class=c>= </i><i class=r>$core</i>-&gt;<i class=b>_quotacheck</i>(<i class=r>$name</i>, <i class=r>$parent_path</i>);</div><div>        <i class=p>if </i>(<i class=c>!</i><i class=r>$qt</i>) <i class=y>$this</i>-&gt;<i class=b>output</i>(<i class=g>"no_space_write"</i>, <i class=o>false</i>);</div><div>        <i class=m># end quota check ...</i></div><div>        <i class=p>if </i>(<i class=r>$save_path </i><i class=c>== </i><i class=g>""</i>) <i class=y>$this</i>-&gt;<i class=b>output</i>(<i class=g>"upload_error_big"</i>, <i class=o>false</i>);</div><div>        <i class=r>$temp_dir </i><i class=c>= </i><i class=o>USER_TEMP</i>;</div><div>        <i class=c>mk_dir</i>(<i class=r>$temp_dir</i>);</div><div>        <i class=y>$this</i>-&gt;<i class=b>upload_chunk</i>(<i class=g>'file'</i>, <i class=r>$save_path</i>, <i class=r>$temp_dir</i>, <i class=r>$save_time</i>, <i class=r>$name</i>);</div><div>    }</div><div></div><div>    <i class=p>private function </i><i class=b>upload_chunk</i>(<i class=r>$fileInput</i>, <i class=r>$save_path</i>, <i class=r>$temp_path</i>, <i class=r>$save_time</i>, <i class=r>$owner </i><i class=c>= </i><i class=g>"admin"</i>)</div><div>    {</div><div>        <i class=r>$file </i><i class=c>= </i><i class=r>$_FILES</i>[<i class=r>$fileInput</i>];</div><div>        <i class=r>$chunk </i><i class=c>= isset</i>(<i class=r>$_REQUEST</i>[<i class=g>"chunk"</i>]) <i class=c>? intval</i>(<i class=r>$_REQUEST</i>[<i class=g>"chunk"</i>]) : <i class=o>0</i>;</div><div>        <i class=r>$chunks </i><i class=c>= isset</i>(<i class=r>$_REQUEST</i>[<i class=g>"chunks"</i>]) <i class=c>? intval</i>(<i class=r>$_REQUEST</i>[<i class=g>"chunks"</i>]) : <i class=o>1</i>;</div><div>        <i class=p>if </i>(<i class=c>!isset</i>(<i class=r>$file</i>)) <i class=y>$this</i>-&gt;<i class=b>output</i>(<i class=g>"upload_error_null"</i>, <i class=o>false</i>);</div><div></div><div>        <i class=p>if </i>(<i class=r>$chunks </i><i class=c>&gt; </i><i class=o>1</i>) {<i class=m>//并发上传，不一定有前后顺序</i></div><div>            <i class=r>$temp_file_pre </i><i class=c>= </i><i class=r>$temp_path </i><i class=c>. md5</i>(<i class=r>$save_path</i>) <i class=c>. </i><i class=g>".part"</i>;</div><div>            <i class=p>if </i>(<i class=c>get_filesize</i>(<i class=r>$file</i>[<i class=g>'tmp_name'</i>]) <i class=c>== </i><i class=o>0</i>) {</div><div>                <i class=y>$this</i>-&gt;<i class=b>output</i>(<i class=g>"chunk_" </i><i class=c>. </i><i class=r>$chunk </i><i class=c>. </i><i class=g>" error!"</i>, <i class=o>false</i>);</div><div>            }</div><div>            <i class=p>if </i>(<i class=c>move_uploaded_file</i>(<i class=r>$file</i>[<i class=g>'tmp_name'</i>], <i class=r>$temp_file_pre </i><i class=c>. </i><i class=r>$chunk</i>)) {</div><div>                <i class=r>$done </i><i class=c>= </i><i class=o>true</i>;</div></div><div style="left:2273px;top:0;width:29px;height:2050px;background:linear-gradient(90deg,rgba(0,0,0,.07),rgba(0,0,0,.1))"></div><div style="left:2540px;top:-1px;width:34px;height:2052px;border-left:1.6px solid #3e4249;border-top:1.6px solid #3e4249"></div><div style="left:2540.8px;top:371.3px;width:33.2px;height:55.7px;background:#3a3f4b"></div><div style="left:2551px;top:11.0px;width:13px;height:14.2px;background:#8a6534"></div><div style="left:2551px;top:371.3px;width:13px;height:21.2px;background:#6a5a49"></div><div style="left:2551px;top:411.3px;width:13px;height:15.7px;background:#6a5a49"></div><div style="left:2540.8px;top:376.6px;width:33.2px;height:4px;background:#4a6ea6"></div><div style="left:177.79999999999995px;top:2020.6px;width:1694.0000000000002px;height:28.8px;background:rgba(96,104,122,.28)"></div><div style="left:1262px;top:-10px;width:1009.5px;height:88.8px;background:#21252b;box-shadow:0 0 19px 4px rgba(0,0,0,.42)"></div><div style="left:1262px;top:0;width:6.2px;height:78.8px;background:#4c4b48"></div><div style="left:1314.5px;top:9.6px;width:533.5px;height:59px;background:#1d1f23"></div><div class="t" style="left:1325.4px;top:25.19999999999999px;font-size:31.2px;color:#d7dae0;letter-spacing:0px">createRaid</div><div class="t" style="left:1700px;top:27.299999999999983px;font-size:25px;color:#abb2bf;letter-spacing:-1.3px">Aa</div><div class="t" style="left:1753.4px;top:24.0px;font-size:26px;color:#abb2bf;letter-spacing:-0.6px">ab</div><div class="t" style="left:1861px;top:27.599999999999994px;font-size:28.8px;color:#cccccc;letter-spacing:0.6px">4 中的 2</div><svg style="left:0px;top:0px" width="2574" height="100" viewBox="0 0 2574 100" ><g transform="translate(-1010 -136.8)"><path d="M2297 166.5 L2308.5 178 L2297 189.5" fill="none" stroke="#c8cacf" stroke-width="2.4"/><path d="M2758.2 184 V189.7 H2795.8 V184" fill="none" stroke="#abb2bf" stroke-width="2.4"/><rect x="2815" y="181.1" width="10" height="9.6" fill="#abb2bf"/><path d="M2835.8 162 V181.6 M2827.4 167 L2844.2 176.4 M2844.2 167 L2827.4 176.4" fill="none" stroke="#abb2bf" stroke-width="2.4"/><path d="M3065.6 192 V164 M3054.6 175 L3065.6 164 L3076.6 175" fill="none" stroke="#cccccc" stroke-width="2.6"/><path d="M3126 163 V191 M3115 180 L3126 191 L3137 180" fill="none" stroke="#cccccc" stroke-width="2.6"/><path d="M3167.5 167.8 H3195 M3167.5 177.6 H3201.5 M3167.5 187.4 H3190" fill="none" stroke="#cccccc" stroke-width="2.6"/><path d="M3232.2 167.6 L3252.2 187.6 M3252.2 167.6 L3232.2 187.6" fill="none" stroke="#cccccc" stroke-width="2.6"/></g></svg></div><div id="status"><div style="left:0;top:0;width:82px;height:54px;background:#4d78cc"></div><svg style="left:0px;top:0px" width="3584" height="54" viewBox="0 0 3584 54" ><g transform="translate(0 -2186)"><path d="M31 2207 L41 2216 L31 2227 M51 2197 L41 2207 L51 2217" fill="none" stroke="#ffffff" stroke-width="2.4"/><circle cx="117.4" cy="2212" r="13.4" fill="none" stroke="#9da5b4" stroke-width="2.4"/><path d="M111.4 2206 L123.4 2218 M123.4 2206 L111.4 2218" fill="none" stroke="#9da5b4" stroke-width="2.4"/><path d="M184.5 2198.5 L198 2224.5 H171 Z" fill="none" stroke="#9da5b4" stroke-width="2.4"/><path d="M184.5 2207 V2216 M184.5 2218.4 V2221.2" fill="none" stroke="#9da5b4" stroke-width="2.6"/><path d="M274.8 2203.6 L282.6 2208 V2217 L274.8 2221.4 L267 2217 V2208 Z M274.8 2203.6 L270.5 2209.6 V2215.6 L274.8 2221.4" fill="none" stroke="#9da5b4" stroke-width="2.2"/><path d="M3449 2205 V2198.5 H3472.5 V2214.5 H3465 L3460.5 2219 V2214.5" fill="none" stroke="#9da5b4" stroke-width="2.2"/><circle cx="3453.5" cy="2210.5" r="4.6" fill="none" stroke="#9da5b4" stroke-width="2.2"/><path d="M3445 2226.5 C3445 2214.5 3462 2214.5 3462 2226.5" fill="none" stroke="#9da5b4" stroke-width="2.2"/><path d="M3518.5 2220.5 H3542 M3521 2220.5 V2209 C3521 2195.5 3539.5 2195.5 3539.5 2209 V2220.5 M3527.5 2222 C3527.5 2226.8 3533 2226.8 3533 2222" fill="none" stroke="#9da5b4" stroke-width="2.3"/></g></svg><div class="t" style="left:143.2px;top:11.599999999999909px;font-size:28.8px;color:#9da5b4">0</div><div class="t" style="left:209.6px;top:11.599999999999909px;font-size:28.8px;color:#9da5b4">0</div><div class="t" style="left:292.7px;top:11.599999999999909px;font-size:28.8px;color:#9da5b4;letter-spacing:0.35px">tabnine</div><div class="t" style="left:2654.9px;top:11.599999999999909px;font-size:28.8px;color:#9da5b4;letter-spacing:0.3px">行 322，列 24 (已选择10)</div><div class="t" style="left:3027.8px;top:11.599999999999909px;font-size:28.8px;color:#9da5b4;letter-spacing:0px">空格: 4</div><div class="t" style="left:3156.5px;top:11.599999999999909px;font-size:28.8px;color:#9da5b4;letter-spacing:1.0px">UTF-8</div><div class="t" style="left:3280.9px;top:11.599999999999909px;font-size:28.8px;color:#9da5b4;letter-spacing:-1.5px">LF</div><div class="t" style="left:3351.1px;top:11.599999999999909px;font-size:28.8px;color:#9da5b4;letter-spacing:0.9px">php</div></div><div class="t" style="left:3433px;top:2138.5px;font-size:46.5px;font-weight:bold;color:rgba(0,0,0,.17);letter-spacing:3.2px;will-change:transform">y.Net</div><script>(function(){var w=window.innerWidth;if(w&&Math.abs(w-3584)>2){document.body.style.zoom=w/3584;}})();</script></body></html>
